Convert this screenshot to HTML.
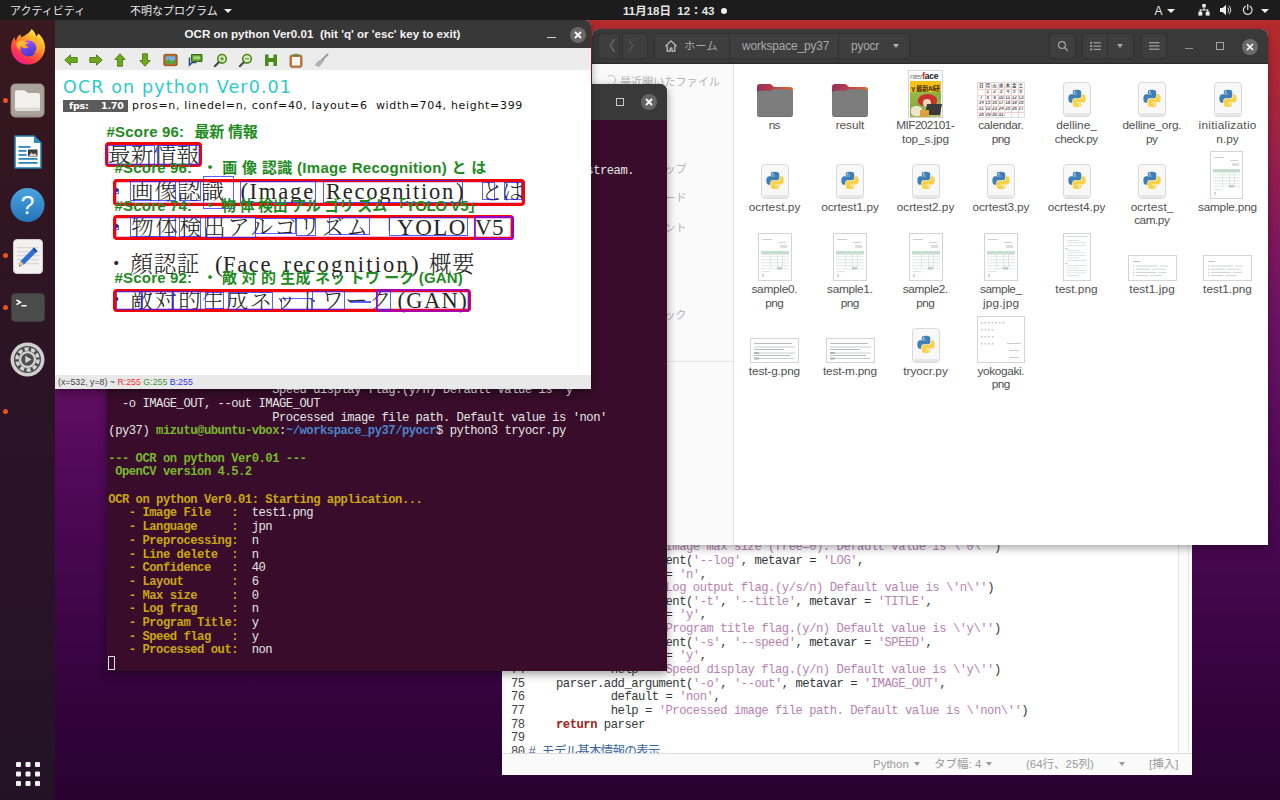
<!DOCTYPE html>
<html lang="ja">
<head>
<meta charset="utf-8">
<title>Ubuntu desktop - OCR on python</title>
<style>
*{box-sizing:border-box;margin:0;padding:0}
html,body{width:1280px;height:800px;overflow:hidden}
body{position:relative;font-family:"Liberation Sans","Noto Sans CJK JP",sans-serif;font-size:13px;color:#333;
 background:linear-gradient(to bottom,#b52b2c 0px,#b32a2e 40px,#a8263a 100px,#98204c 160px,#80185c 240px,#6c1262 320px,#5e0e60 400px,#580b5c 430px,#4a0752 520px,#3e0546 620px,#31033a 720px,#290230 800px);}
.abs{position:absolute}
/* ---------- top bar ---------- */
#topbar{position:absolute;left:0;top:0;width:1280px;height:20px;background:#1c1c1c;color:#e6e6e6;font-size:11px;line-height:19px;z-index:50;white-space:nowrap}
#topbar span{position:absolute;top:1.800px}
#topbar span.tri{top:8.500px;width:0;height:0;border-left:4px solid transparent;border-right:4px solid transparent;border-top:4.500px solid #efefef}
/* ---------- dock ---------- */
#dock{position:absolute;left:0;top:20px;width:55px;height:780px;z-index:49;
 background:linear-gradient(to bottom,#3a181f 0,#33161f 120px,#2d1425 300px,#291328 500px,#231226 780px)}
.dot{position:absolute;left:3px;width:5px;height:5px;border-radius:50%;background:#e95420}
/* ---------- generic window ---------- */
.win{position:absolute;overflow:hidden}
.hb{position:absolute;left:0;top:0;right:0;background:#353535}

/* ---------- gedit ---------- */
#gedit{left:502px;top:150px;width:690px;height:625px;background:#fff;z-index:10}
#gedit .code{position:absolute;left:0;top:0;width:678px;height:604px;overflow:hidden;font-family:"Liberation Mono","DejaVu Sans Mono","Noto Sans CJK JP",monospace;font-size:12.2px;letter-spacing:-0.47px;color:#34383a;white-space:pre}
#gedit .ln{position:absolute;left:0;height:13.65px;line-height:13.65px;width:678px}
#gedit .ln i{font-style:normal;position:absolute;left:9px;color:#444}
#gedit .ln b{font-weight:normal;position:absolute;left:26.6px}
#gedit .s{color:#b781b4}
#gedit .k{color:#a01f24;font-weight:bold}
#gedit .c{color:#3c66a6;font-size:12.600px;letter-spacing:-.85px}
#gedit .sb{position:absolute;left:0;right:0;bottom:0;height:22px;background:#fafafa;border-top:1px solid #dcdcdc;font-size:11.500px;color:#9a9a9a;line-height:20px}
#gedit .sb span{position:absolute;top:0;white-space:nowrap}
#gedit .sb u{display:inline-block;width:0;height:0;margin-left:5px;vertical-align:2px;border-left:3.500px solid transparent;border-right:3.500px solid transparent;border-top:4px solid #9a9a9a}
#gedit .scr{position:absolute;left:675.500px;top:0;width:14.500px;height:604px;background:#fcfcfc;border-left:1px solid #e4e4e4}
#gedit .scr:after{content:"";position:absolute;left:9.500px;top:0;bottom:0;width:1px;background:#e6e6e6}

/* ---------- nautilus ---------- */
#naut{left:591.500px;top:29px;width:676.500px;height:516px;background:#fff;border-radius:7px 7px 0 0;z-index:20;box-shadow:0 3px 9px rgba(0,0,0,.35)}
#naut .hb{height:35px;background:#393939;border-bottom:1px solid #2a2a2a}
#naut .btn{position:absolute;top:4px;height:26px;background:#3e3e3e;border:1px solid #313131;border-radius:4px;color:#a9a9a9;font-size:12.5px;line-height:24px;white-space:nowrap}
#naut .side{position:absolute;left:0;top:35px;width:142px;bottom:0;background:#fafafa;border-right:1px solid #e0e0e0;color:#b4b4b4;font-size:11.100px}
#naut .side div{position:absolute;left:28.500px;height:20px;line-height:20px;white-space:nowrap}
#naut .f{position:absolute;width:90px;margin-left:-45px;text-align:center;font-size:11.800px;line-height:13.200px;color:#505050;white-space:nowrap}
#naut .ic{position:absolute}

/* ---------- terminal ---------- */
#term{left:106.500px;top:84px;width:560.500px;height:587px;background:#380c2a;border-radius:7px 7px 0 0;z-index:30;box-shadow:0 3px 10px rgba(0,0,0,.4)}
#term .hb{height:36px;background:#393939}
#term .tt{position:absolute;left:0;right:0;top:9px;text-align:center;color:#bdbdbd;font-weight:bold;font-size:12.500px}
#term .tb{position:absolute;left:0;top:0;right:0;bottom:0;font-family:"Liberation Mono","DejaVu Sans Mono",monospace;font-size:12.200px;letter-spacing:-0.485px;color:#e6e6e6;white-space:pre}
#term .r{position:absolute;left:1.800px;height:13.680px;line-height:13.680px}
#term b.g{color:#79b829}
#term b.bl{color:#4a84c8}
#term b.y{color:#c9a70c}

/* ---------- OCR window ---------- */
#ocr{left:55px;top:20px;width:536px;height:369px;background:#fff;border-radius:0 6px 0 0;z-index:40;box-shadow:0 3px 10px rgba(0,0,0,.4)}
#ocr .hb{height:28px;background:#383838}
#ocr .tt{position:absolute;left:0;right:1px;top:7px;text-align:center;color:#f4f4f4;font-weight:bold;font-size:11.600px;white-space:nowrap}
#ocr .tool{position:absolute;left:0;top:28px;width:536px;height:22px;background:#ececec}
#ocr .tool svg{position:absolute;top:4.500px}
#ocr .img{position:absolute;left:0;top:50px;width:536px;height:307px;background:#fff;overflow:hidden}
#ocr .stat{position:absolute;left:0;bottom:0;width:536px;height:14.500px;background:#e9e9e9;font-size:8.800px;line-height:15px;padding-left:3px;color:#444;white-space:nowrap}
#ocr .h1{position:absolute;left:8px;top:6.300px;font-family:"DejaVu Sans","Liberation Sans",sans-serif;font-size:17.500px;line-height:22px;color:#2ccaca;white-space:nowrap;letter-spacing:1.130px}
#ocr .fps{position:absolute;left:8px;top:30px;width:65px;height:12px;background:#5b5b5b;color:#fff;font-family:"DejaVu Sans","Liberation Sans",sans-serif;font-size:9.500px;line-height:12px;font-weight:bold;padding-left:6px;white-space:pre;letter-spacing:-.2px}
#ocr .h2{position:absolute;left:77px;top:29px;font-family:"DejaVu Sans","Liberation Sans",sans-serif;font-size:11px;line-height:14px;color:#111;white-space:nowrap;letter-spacing:.68px}

#ocr .t{position:absolute;line-height:1;white-space:pre;font-weight:300}
#ocr .rb{position:absolute;border:3px solid #f00404;border-radius:4px;box-shadow:0 0 0 .6px rgba(150,0,200,.55) inset}
#ocr .bb{position:absolute;border:1px solid rgba(40,40,255,.75)}
#ocr .pb{position:absolute;border:2px solid rgba(150,0,215,.8);border-radius:3px}
</style>
</head>
<body>

<!-- ================= TOP BAR ================= -->
<!-- TOP-START -->
<div id="topbar">
 <span style="left:10px">アクティビティ</span>
 <span style="left:130px">不明なプログラム</span>
 <span class="tri" style="left:224px"></span>
 <span id="clock" style="left:623px;font-weight:bold;font-size:11.500px">11月18日&nbsp; 12：43</span>
 <span style="left:721px;top:7.500px;width:6px;height:6px;border-radius:50%;background:#f2f2f2"></span>
 <span style="left:1154.500px;font-size:12px">A</span>
 <span class="tri" style="left:1167px"></span>
 <svg style="position:absolute;left:1198px;top:4px" width="12" height="12" viewBox="0 0 14 14"><g fill="#efefef"><rect x="5" y="0" width="4" height="4"/><rect x="6.400" y="4" width="1.200" height="3"/><rect x="2" y="6.400" width="10" height="1.200"/><rect x="2" y="6.400" width="1.200" height="3"/><rect x="10.800" y="6.400" width="1.200" height="3"/><rect x=".5" y="9" width="4.500" height="4.500"/><rect x="9" y="9" width="4.500" height="4.500"/></g></svg>
 <svg style="position:absolute;left:1220px;top:4px" width="12" height="12" viewBox="0 0 14 14"><path d="M0 4.800h3L7 1v12L3 9.200H0z" fill="#efefef"/><path d="M8.800 4.200a3.600 3.600 0 0 1 0 5.600M10.300 2.300a6 6 0 0 1 0 9.400" fill="none" stroke="#cfcfcf" stroke-width="1.200"/></svg>
 <svg style="position:absolute;left:1241.500px;top:4px" width="11.500" height="11.500" viewBox="0 0 14 14"><path d="M4.300 2.800a5.300 5.300 0 1 0 5.400 0" fill="none" stroke="#efefef" stroke-width="1.400" stroke-linecap="round"/><path d="M7 .8v5.700" stroke="#efefef" stroke-width="1.400" stroke-linecap="round"/></svg>
 <span class="tri" style="left:1261px"></span>
</div>
<!-- TOP-END -->

<!-- ================= DOCK ================= -->
<!-- DOCK-START -->
<div id="dock">
 <!-- firefox -->
 <svg style="position:absolute;left:10px;top:8px" width="36" height="37" viewBox="0 0 36 37">
  <defs><linearGradient id="ffa" x1=".85" y1=".05" x2=".25" y2="1"><stop offset="0" stop-color="#fff04a"/><stop offset=".28" stop-color="#ffb52a"/><stop offset=".55" stop-color="#ff6a2c"/><stop offset=".8" stop-color="#ff2f55"/><stop offset="1" stop-color="#e81f9a"/></linearGradient>
  <linearGradient id="ffb" x1=".3" y1="0" x2=".6" y2="1"><stop offset="0" stop-color="#a557ff"/><stop offset=".5" stop-color="#6a45e6"/><stop offset="1" stop-color="#4438c8"/></linearGradient>
  <linearGradient id="ffc" x1="0" y1="0" x2="1" y2="1"><stop offset="0" stop-color="#ffd23a"/><stop offset="1" stop-color="#ff8a1f"/></linearGradient></defs>
  <path d="M21.500 1c2.600 2 4.200 4.600 4.500 7.400 1.200-.6 2-1.700 2.200-2.800 4 3.300 6.800 8 6.800 13.900C35 29 27.400 36.500 18 36.500S1 29 1 19.500c0-4.200 1.400-7.800 3.600-10.400 0 1.600.5 3 1.400 3.900C6.400 10 8 7.700 10.600 6.200c-.2 1.300.2 2.300 1 3 2.200-1.300 4.500-2.200 6.200-3.700C19.500 4 20.800 2.700 21.500 1z" fill="url(#ffa)"/>
  <circle cx="18.500" cy="20.500" r="8" fill="url(#ffb)"/>
  <path d="M6.500 15.500c1.800-2.800 4.800-3.600 7.300-2.800 1.900.6 3.100 2 5.500 1.900-1 1.300-2.600 1.700-3.900 1.700.6 1.400 1.800 2.500 3.300 3-2.400 1.700-6 1.200-7.700-1-1 .9-1.100 2.600-.4 4-2.600-1.100-4.300-3.600-4.100-6.800z" fill="url(#ffc)"/>
  <path d="M19 9.500c4 .2 7.200 3 8 6.800.8 4-1.400 7.400-4.600 8.800 4-.2 7.300-3 8.200-7 .8-3.800-.8-7.600-3.800-9.800.3 1.200 0 2.300-.6 3.200C25 9.800 22.500 8.800 19 9.500z" fill="#ffb52a" opacity=".55"/>
 </svg>
 <!-- files -->
 <svg style="position:absolute;left:10px;top:63px" width="35" height="35" viewBox="0 0 35 35"><rect x=".5" y=".5" width="34" height="34" rx="5" fill="#9b948a"/><rect x="1.500" y="1.500" width="32" height="31" rx="4.500" fill="#aaa397"/><path d="M5 9.500c0-1.400.9-2.300 2.300-2.300h6.200c1 0 1.600.4 2.200 1l1.200 1.100c.4.400.9.600 1.600.600h9.200c1.400 0 2.300.9 2.300 2.300V25.500c0 1.400-.9 2.300-2.300 2.300H7.300C5.900 27.800 5 26.900 5 25.500z" fill="#f3f1ee"/><rect x="5" y="24.500" width="25" height="3.300" rx="1.600" fill="#dedbd6"/></svg>
 <!-- writer -->
 <svg style="position:absolute;left:14px;top:115px" width="28" height="34" viewBox="0 0 28 34"><path d="M1 1h19l7 7v25H1z" fill="#fdfdfd" stroke="#1f7fb5" stroke-width="1.600" stroke-linejoin="round"/><path d="M20 1v7h7z" fill="#2a8fc9"/><g fill="#2f86bd"><rect x="4.500" y="11" width="12" height="1.800"/><rect x="4.500" y="15" width="8" height="1.800"/><rect x="4.500" y="19" width="8" height="1.800"/><rect x="4.500" y="23" width="19" height="1.800"/><rect x="4.500" y="27" width="19" height="1.800"/></g><rect x="14" y="14.500" width="9.500" height="7" fill="#3d3d3d"/><path d="M14.800 21 17.500 17.500 19.500 19.500 21 18 23 21z" fill="#d8d8d8"/></svg>
 <!-- help -->
 <svg style="position:absolute;left:10px;top:167px" width="35" height="36" viewBox="0 0 35 36"><defs><linearGradient id="hg" x1="0" y1="0" x2="0" y2="1"><stop offset="0" stop-color="#4aa3e0"/><stop offset="1" stop-color="#2475b8"/></linearGradient></defs><circle cx="17.500" cy="18" r="17" fill="url(#hg)"/><text x="17.500" y="26.500" text-anchor="middle" font-family="Liberation Sans,sans-serif" font-size="25" fill="#fff">?</text></svg>
 <!-- text editor -->
 <svg style="position:absolute;left:13px;top:219px" width="30" height="35" viewBox="0 0 30 35"><rect x=".5" y=".5" width="29" height="34" rx="3.500" fill="#f2f1ef" stroke="#cfcdc8"/><g fill="#d9d7d2"><rect x="4" y="8" width="22" height="1.200"/><rect x="4" y="12" width="22" height="1.200"/><rect x="4" y="16" width="22" height="1.200"/><rect x="4" y="20" width="22" height="1.200"/><rect x="4" y="24" width="22" height="1.200"/></g><path d="M21 8.500 24.500 12 11 25.500 6 27.500 7.500 22z" fill="#2f6fd6"/><path d="M7.500 22 6 27.500 11 25.500z" fill="#f0c27a"/><path d="M6.500 25.800 6 27.500 7.700 26.800z" fill="#444"/><path d="M21 8.500 24.500 12 22.800 13.700 19.300 10.200z" fill="#1f4fa8"/></svg>
 <!-- terminal -->
 <svg style="position:absolute;left:10.500px;top:273px" width="34" height="29" viewBox="0 0 34 29"><rect x=".5" y=".5" width="33" height="28" rx="3.500" fill="#4b4b4b" stroke="#3a3a3a"/><path d="M5.500 7 9.500 9.300 5.500 11.600" fill="none" stroke="#fff" stroke-width="1.500"/><rect x="10.500" y="12" width="5" height="1.500" fill="#fff"/></svg>
 <!-- settings / updater -->
 <svg style="position:absolute;left:10px;top:322px" width="35" height="35" viewBox="0 0 35 35"><circle cx="17.500" cy="17.500" r="17" fill="#cfcfcf"/><circle cx="17.500" cy="17.500" r="13.500" fill="#4e4e4e"/><circle cx="17.500" cy="17.500" r="10.500" fill="none" stroke="#d4d4d4" stroke-width="3.400" stroke-dasharray="4.100 2.500"/><circle cx="17.500" cy="17.500" r="8.600" fill="#d4d4d4"/><circle cx="17.500" cy="17.500" r="6.300" fill="#4e4e4e"/><path d="M15.300 13.800 21.500 17.500 15.300 21.200z" fill="#d4d4d4"/></svg>
 <span class="dot" style="top:77.500px"></span><span class="dot" style="top:232.500px"></span><span class="dot" style="top:284.500px"></span><span class="dot" style="top:388.500px"></span>
 <!-- apps grid -->
 <svg style="position:absolute;left:16px;top:742px" width="24" height="24" viewBox="0 0 24 24"><g fill="#f2f2f2"><rect x="0" y="0" width="5" height="5" rx="1"/><rect x="9.500" y="0" width="5" height="5" rx="1"/><rect x="19" y="0" width="5" height="5" rx="1"/><rect x="0" y="9.500" width="5" height="5" rx="1"/><rect x="9.500" y="9.500" width="5" height="5" rx="1"/><rect x="19" y="9.500" width="5" height="5" rx="1"/><rect x="0" y="19" width="5" height="5" rx="1"/><rect x="9.500" y="19" width="5" height="5" rx="1"/><rect x="19" y="19" width="5" height="5" rx="1"/></g></svg>
</div>
<!-- DOCK-END -->

<!-- ================= GEDIT ================= -->
<div id="gedit" class="win">
<div class="hb gedit-hb" style="height:37px;background:#393939;z-index:2"><span style="position:absolute;left:10px;top:10px;color:#bdbdbd;font-size:12px">開く(O)</span><span style="position:absolute;left:0;right:0;top:5px;text-align:center;color:#cfcfcf;font-weight:bold;font-size:12px;line-height:14px">tryocr.py<br><span style="font-weight:normal;font-size:10.500px;color:#a5a5a5">~/workspace_py37/pyocr</span></span><span style="position:absolute;right:70px;top:10px;color:#bdbdbd;font-size:12px">保存(S)</span></div>
<div class="code">
<div class="ln" style="top:391.20px"><i>65</i><b>            help = <span class=s>'Image max size (free=0). Default value is \'0\''</span>)</b></div>
<div class="ln" style="top:404.85px"><i>66</i><b>    parser.add_argument(<span class=s>'--log'</span>, metavar = <span class=s>'LOG'</span>,</b></div>
<div class="ln" style="top:418.50px"><i>67</i><b>            default = <span class=s>'n'</span>,</b></div>
<div class="ln" style="top:432.15px"><i>68</i><b>            help = <span class=s>'Log output flag.(y/s/n) Default value is \'n\''</span>)</b></div>
<div class="ln" style="top:445.80px"><i>69</i><b>    parser.add_argument(<span class=s>'-t'</span>, <span class=s>'--title'</span>, metavar = <span class=s>'TITLE'</span>,</b></div>
<div class="ln" style="top:459.45px"><i>70</i><b>            default = <span class=s>'y'</span>,</b></div>
<div class="ln" style="top:473.10px"><i>71</i><b>            help = <span class=s>'Program title flag.(y/n) Default value is \'y\''</span>)</b></div>
<div class="ln" style="top:486.75px"><i>72</i><b>    parser.add_argument(<span class=s>'-s'</span>, <span class=s>'--speed'</span>, metavar = <span class=s>'SPEED'</span>,</b></div>
<div class="ln" style="top:500.40px"><i>73</i><b>            default = <span class=s>'y'</span>,</b></div>
<div class="ln" style="top:514.05px"><i>74</i><b>            help = <span class=s>'Speed display flag.(y/n) Default value is \'y\''</span>)</b></div>
<div class="ln" style="top:527.70px"><i>75</i><b>    parser.add_argument(<span class=s>'-o'</span>, <span class=s>'--out'</span>, metavar = <span class=s>'IMAGE_OUT'</span>,</b></div>
<div class="ln" style="top:541.35px"><i>76</i><b>            default = <span class=s>'non'</span>,</b></div>
<div class="ln" style="top:555.00px"><i>77</i><b>            help = <span class=s>'Processed image file path. Default value is \'non\''</span>)</b></div>
<div class="ln" style="top:568.65px"><i>78</i><b>    <span class=k>return</span> parser</b></div>
<div class="ln" style="top:582.30px"><i>79</i><b></b></div>
<div class="ln" style="top:595.95px"><i>80</i><b><span class=c># モデル基本情報の表示</span></b></div>
</div>
<div class="scr"></div>
<div class="sb"><span style="left:371px">Python<u></u></span><span style="left:432px">タブ幅: 4<u></u></span><span style="left:524px">(64行、25列)</span><span style="left:612px"><u></u></span><span style="left:647px">[挿入]</span></div>
</div>

<!-- NAUT-START -->
<div id="naut" class="win">
<div class="hb">
<div class="btn" style="left:6px;width:22px;border-radius:4px 0 0 4px;text-align:center;color:#7a7a7a;font-size:14px;line-height:23px">&#12296;</div>
<div class="btn" style="left:30px;width:26px;border-radius:0 4px 4px 0;text-align:center;color:#5c5c5c;font-size:14px;line-height:23px">&#12297;</div>
<div class="btn" style="left:62.500px;width:76px;border-radius:4px 0 0 4px"><svg style="position:absolute;left:9px;top:5px" width="14" height="14" viewBox="0 0 14 14"><path d="M7 1.800 1.800 7H3.200v5.200h2.900V9h1.800v3.200h2.900V7h1.400z" fill="none" stroke="#c4c4c4" stroke-width="1.200" stroke-linejoin="round"/></svg><span style="position:absolute;left:29px;top:0;font-size:11.300px">ホーム</span></div>
<div class="btn" style="left:138.500px;width:109px;border-radius:0;border-left:none"><span style="position:absolute;left:12px;top:0;font-size:11.900px;letter-spacing:-.15px">workspace_py37</span></div>
<div class="btn" style="left:247.500px;width:71px;border-radius:0 4px 4px 0;border-left:none"><span style="position:absolute;left:12px;top:0;font-size:11.900px;letter-spacing:-.2px">pyocr</span><span style="position:absolute;left:54px;top:10px;width:0;height:0;border-left:3.500px solid transparent;border-right:3.500px solid transparent;border-top:4px solid #b5b5b5"></span></div>
<div class="btn" style="left:457px;width:27px"><svg style="position:absolute;left:7px;top:6px" width="12" height="12" viewBox="0 0 14 14"><circle cx="5.800" cy="5.800" r="4" fill="none" stroke="#a2a2a2" stroke-width="1.400"/><path d="M8.800 8.800 12.500 12.500" stroke="#a2a2a2" stroke-width="1.600"/></svg></div>
<div class="btn" style="left:490px;width:26px;border-radius:4px 0 0 4px"><svg style="position:absolute;left:7px;top:7px" width="11" height="10" viewBox="0 0 13 12"><g fill="#a2a2a2"><rect x="0" y="1" width="2.500" height="2.200"/><rect x="4" y="1.400" width="9" height="1.400"/><rect x="0" y="5" width="2.500" height="2.200"/><rect x="4" y="5.400" width="9" height="1.400"/><rect x="0" y="9" width="2.500" height="2.200"/><rect x="4" y="9.400" width="9" height="1.400"/></g></svg></div>
<div class="btn" style="left:516px;width:26px;border-radius:0 4px 4px 0;border-left:none"><span style="position:absolute;left:9px;top:10px;width:0;height:0;border-left:3.500px solid transparent;border-right:3.500px solid transparent;border-top:4px solid #a5a5a5"></span></div>
<div class="btn" style="left:549px;width:26px"><svg style="position:absolute;left:7.500px;top:7px" width="10.500" height="10" viewBox="0 0 13 12"><g fill="#a2a2a2"><rect x="0" y="1.200" width="13" height="1.500"/><rect x="0" y="5.200" width="13" height="1.500"/><rect x="0" y="9.200" width="13" height="1.500"/></g></svg></div>
<div style="position:absolute;left:593px;top:19px;width:8px;height:1.400px;background:#8c8c8c"></div>
<div style="position:absolute;left:624px;top:13px;width:8px;height:8px;border:1.300px solid #a5a5a5"></div>
<div style="position:absolute;left:650px;top:9.500px;width:16px;height:16px;border-radius:50%;background:#6a6a6a"><svg style="position:absolute;left:4px;top:4px" width="8" height="8" viewBox="0 0 8 8"><path d="M1 1 7 7M7 1 1 7" stroke="#fff" stroke-width="1.700"/></svg></div>
</div>
<div class="side">
<div style="top:8px">最近開いたファイル</div>
<div style="top:37.1px">星付き</div>
<div style="top:66.2px">ホーム</div>
<div style="top:95.3px">デスクトップ</div>
<div style="top:124.4px">ダウンロード</div>
<div style="top:153.5px">ドキュメント</div>
<div style="top:182.6px">ビデオ</div>
<div style="top:211.7px">ピクチャ</div>
<div style="top:240.8px">ミュージック</div>
<div style="top:269.9px">ゴミ箱</div>
<span style="position:absolute;left:14px;top:11px;width:10px;height:10px;border:1.200px solid #c4c4c4;border-radius:50%;border-left-color:transparent"></span>
<span style="position:absolute;left:0;top:297px;width:141px;height:1px;background:#e6e6e6"></span>
<div style="top:307px">他の場所</div>
</div>
<svg class="ic" style="left:165px;top:55px" width="36" height="33" viewBox="0 0 36 33"><linearGradient id="fg775" x1="0" x2="1" y1="0" y2="0"><stop offset="0" stop-color="#96305a"/><stop offset=".45" stop-color="#b8414a"/><stop offset="1" stop-color="#e8672b"/></linearGradient><path d="M3 0h9.5c1.2 0 1.8.5 2.6 1.3l1 .9c.5.5 1 .7 1.8.7H33a3 3 0 0 1 3 3V12H0V3a3 3 0 0 1 3-3z" fill="url(#fg775)"/><path d="M0 9.2c0-1.5 1-2.400 2.600-2.400h10.200c1.200 0 1.900-.3 2.600-1l.5-.5h17.600C35 5.300 36 6.300 36 7.800V30a3 3 0 0 1-3 3H3a3 3 0 0 1-3-3z" fill="#7d7d7d"/><path d="M0 29.500V30a3 3 0 0 0 3 3h30a3 3 0 0 0 3-3v-.5a3 3 0 0 1-3 3H3a3 3 0 0 1-3-3z" fill="#636363"/></svg>
<div class="f" style="left:183px;top:90.4px"><span style="letter-spacing:-0.71px;margin-right:0.71px">ns</span></div>
<svg class="ic" style="left:240px;top:55px" width="36" height="33" viewBox="0 0 36 33"><linearGradient id="fg850" x1="0" x2="1" y1="0" y2="0"><stop offset="0" stop-color="#96305a"/><stop offset=".45" stop-color="#b8414a"/><stop offset="1" stop-color="#e8672b"/></linearGradient><path d="M3 0h9.5c1.2 0 1.8.5 2.6 1.3l1 .9c.5.5 1 .7 1.8.7H33a3 3 0 0 1 3 3V12H0V3a3 3 0 0 1 3-3z" fill="url(#fg850)"/><path d="M0 9.2c0-1.5 1-2.400 2.600-2.400h10.200c1.200 0 1.900-.3 2.600-1l.5-.5h17.600C35 5.300 36 6.300 36 7.800V30a3 3 0 0 1-3 3H3a3 3 0 0 1-3-3z" fill="#7d7d7d"/><path d="M0 29.500V30a3 3 0 0 0 3 3h30a3 3 0 0 0 3-3v-.5a3 3 0 0 1-3 3H3a3 3 0 0 1-3-3z" fill="#636363"/></svg>
<div class="f" style="left:258.5px;top:90.4px"><span style="letter-spacing:-0.07px;margin-right:0.07px">result</span></div>
<div class="ic" style="left:316px;top:41px;width:35px;height:48px;border:1px solid #d6d6d6;background:#fff;overflow:hidden"><div style="position:absolute;left:0;top:1px;width:100%;height:9px;font:italic 8px/9px 'Liberation Sans',sans-serif;color:#777;white-space:nowrap;text-indent:1.500px;letter-spacing:-.4px">nter<span style="font:bold 8.600px/9px 'Liberation Sans',sans-serif;color:#222;letter-spacing:-.3px"><span style="color:#d81e1e">f</span>ace</span></div><div style="position:absolute;left:1px;top:10px;width:31px;height:11px;background:#f6c21a"></div><div style="position:absolute;left:1.500px;top:13.500px;width:30px;height:7px;font:bold 6.500px/7px 'Liberation Sans','Noto Sans CJK JP',sans-serif;color:#4a2a08;white-space:nowrap;overflow:hidden;letter-spacing:-.5px">ｙ最新AI研究室</div><div style="position:absolute;left:1px;top:21px;width:31px;height:25px;background:linear-gradient(160deg,#9dbb4a 0,#86ad3e 45%,#c8c47a 100%)"></div><div style="position:absolute;left:9px;top:23px;width:19px;height:12px;border-radius:50% 50% 35% 35%;background:#c9322b"></div><div style="position:absolute;left:14px;top:28px;width:8px;height:8px;border-radius:50%;background:#f2d6b8"></div><div style="position:absolute;left:17px;top:33px;width:15px;height:11px;background:#3d3b3a;transform:skewX(-10deg)"></div><div style="position:absolute;left:2px;top:35px;width:11px;height:10px;background:#efe6cf;border-radius:40%"></div><div style="position:absolute;left:11px;top:39px;width:9px;height:7px;background:#d9a13a"></div></div>
<div class="f" style="left:334px;top:90.4px"><span style="letter-spacing:-0.59px;margin-right:0.59px">MIF202101-</span><br><span style="letter-spacing:-0.10px;margin-right:0.10px">top_s.jpg</span></div>
<div class="ic" style="left:385px;top:53px;width:48px;height:36px;border:1px solid #dcdcdc;background:#fff;overflow:hidden;font:bold 4.600px/5.700px 'Liberation Sans','Noto Sans CJK JP',sans-serif;color:#555"><span style="position:absolute;left:0.5px;top:0.2px;width:6.600px;text-align:center">日</span><span style="position:absolute;left:7.1px;top:0.2px;width:6.600px;text-align:center">月</span><span style="position:absolute;left:13.7px;top:0.2px;width:6.600px;text-align:center">火</span><span style="position:absolute;left:20.3px;top:0.2px;width:6.600px;text-align:center">水</span><span style="position:absolute;left:26.9px;top:0.2px;width:6.600px;text-align:center">木</span><span style="position:absolute;left:33.5px;top:0.2px;width:6.600px;text-align:center">金</span><span style="position:absolute;left:40.1px;top:0.2px;width:6.600px;text-align:center">土</span><span style="position:absolute;left:7.1px;top:5.9px;width:6.600px;text-align:center">1</span><span style="position:absolute;left:13.7px;top:5.9px;width:6.600px;text-align:center">2</span><span style="position:absolute;left:20.3px;top:5.9px;width:6.600px;text-align:center">3</span><span style="position:absolute;left:26.9px;top:5.9px;width:6.600px;text-align:center">4</span><span style="position:absolute;left:33.5px;top:5.9px;width:6.600px;text-align:center">5</span><span style="position:absolute;left:40.1px;top:5.9px;width:6.600px;text-align:center">6</span><span style="position:absolute;left:0.5px;top:11.6px;width:6.600px;text-align:center">7</span><span style="position:absolute;left:7.1px;top:11.6px;width:6.600px;text-align:center">8</span><span style="position:absolute;left:13.7px;top:11.6px;width:6.600px;text-align:center">9</span><span style="position:absolute;left:20.3px;top:11.6px;width:6.600px;text-align:center">10</span><span style="position:absolute;left:26.9px;top:11.6px;width:6.600px;text-align:center">11</span><span style="position:absolute;left:33.5px;top:11.6px;width:6.600px;text-align:center">12</span><span style="position:absolute;left:40.1px;top:11.6px;width:6.600px;text-align:center">13</span><span style="position:absolute;left:0.5px;top:17.3px;width:6.600px;text-align:center">14</span><span style="position:absolute;left:7.1px;top:17.3px;width:6.600px;text-align:center">15</span><span style="position:absolute;left:13.7px;top:17.3px;width:6.600px;text-align:center">16</span><span style="position:absolute;left:20.3px;top:17.3px;width:6.600px;text-align:center">17</span><span style="position:absolute;left:26.9px;top:17.3px;width:6.600px;text-align:center">18</span><span style="position:absolute;left:33.5px;top:17.3px;width:6.600px;text-align:center">19</span><span style="position:absolute;left:40.1px;top:17.3px;width:6.600px;text-align:center">20</span><span style="position:absolute;left:0.5px;top:23px;width:6.600px;text-align:center">21</span><span style="position:absolute;left:7.1px;top:23px;width:6.600px;text-align:center">22</span><span style="position:absolute;left:13.7px;top:23px;width:6.600px;text-align:center">23</span><span style="position:absolute;left:20.3px;top:23px;width:6.600px;text-align:center">24</span><span style="position:absolute;left:26.9px;top:23px;width:6.600px;text-align:center">25</span><span style="position:absolute;left:33.5px;top:23px;width:6.600px;text-align:center">26</span><span style="position:absolute;left:40.1px;top:23px;width:6.600px;text-align:center">27</span><span style="position:absolute;left:0.5px;top:28.7px;width:6.600px;text-align:center">28</span><span style="position:absolute;left:7.1px;top:28.7px;width:6.600px;text-align:center">29</span><span style="position:absolute;left:13.7px;top:28.7px;width:6.600px;text-align:center">30</span><span style="position:absolute;left:20.3px;top:28.7px;width:6.600px;text-align:center">31</span><div style="position:absolute;left:0;top:6px;width:100%;height:.5px;background:#f0cfd0"></div><div style="position:absolute;left:0;top:11.7px;width:100%;height:.5px;background:#f0cfd0"></div><div style="position:absolute;left:0;top:17.4px;width:100%;height:.5px;background:#f0cfd0"></div><div style="position:absolute;left:0;top:23.1px;width:100%;height:.5px;background:#f0cfd0"></div><div style="position:absolute;left:0;top:28.8px;width:100%;height:.5px;background:#f0cfd0"></div><div style="position:absolute;top:0;left:7px;height:100%;width:.5px;background:#f0cfd0"></div><div style="position:absolute;top:0;left:13.6px;height:100%;width:.5px;background:#f0cfd0"></div><div style="position:absolute;top:0;left:20.2px;height:100%;width:.5px;background:#f0cfd0"></div><div style="position:absolute;top:0;left:26.8px;height:100%;width:.5px;background:#f0cfd0"></div><div style="position:absolute;top:0;left:33.4px;height:100%;width:.5px;background:#f0cfd0"></div><div style="position:absolute;top:0;left:40px;height:100%;width:.5px;background:#f0cfd0"></div></div>
<div class="f" style="left:409.5px;top:90.4px"><span style="letter-spacing:-0.27px;margin-right:0.27px">calendar.</span><br><span style="letter-spacing:-0.47px;margin-right:0.47px">png</span></div>
<svg class="ic" style="left:471px;top:53px" width="28" height="35" viewBox="0 0 28 35"><rect x=".5" y=".5" width="27" height="34" rx="3.5" fill="#f8f8f8" stroke="#d9d9d9"/><rect x="1.5" y="31" width="25" height="3" rx="1.5" fill="#e6e6e6"/><g transform="translate(5.400,7.800) scale(.72)"><path fill="#3f7fb6" fill-rule="evenodd" d="M14.25.18l.9.2.73.26.59.3.45.32.34.34.25.34.16.33.1.3.04.26.02.2-.01.13V8.5l-.05.63-.13.55-.21.46-.26.38-.3.31-.33.25-.35.19-.35.14-.33.1-.3.07-.26.04-.21.02H8.77l-.69.05-.59.14-.5.22-.41.27-.33.32-.27.35-.2.36-.15.37-.1.35-.07.32-.04.27-.02.21v3.06H3.17l-.21-.03-.28-.07-.32-.12-.35-.18-.36-.26-.36-.36-.35-.46-.32-.59-.28-.73-.21-.88-.14-1.05-.05-1.23.06-1.22.16-1.04.24-.87.32-.71.36-.57.4-.44.42-.33.42-.24.4-.16.36-.1.32-.05.24-.01h.16l.06.01h8.16v-.83H6.18l-.01-2.75-.02-.37.05-.34.11-.31.17-.28.25-.26.31-.23.38-.2.44-.18.51-.15.58-.12.64-.1.71-.06.77-.04.84-.02 1.27.05zm-6.3 1.98l-.23.33-.08.41.08.41.23.34.33.22.41.09.41-.09.33-.22.23-.34.08-.41-.08-.41-.23-.33-.33-.22-.41-.09-.41.09z"/><path fill="#f7d34c" fill-rule="evenodd" d="M21.04 6.11l.28.06.32.12.35.18.36.27.36.35.35.47.32.59.28.73.21.88.14 1.04.05 1.23-.06 1.23-.16 1.04-.24.86-.32.71-.36.57-.4.45-.42.33-.42.24-.4.16-.36.09-.32.05-.24.02-.16-.01h-8.22v.82h5.84l.01 2.76.02.36-.05.34-.11.31-.17.29-.25.25-.31.24-.38.2-.44.17-.51.15-.58.13-.64.09-.71.07-.77.04-.84.01-1.27-.04-1.07-.14-.9-.2-.73-.25-.59-.3-.45-.33-.34-.34-.25-.34-.16-.33-.1-.3-.04-.25-.02-.2.01-.13v-5.34l.05-.64.13-.54.21-.46.26-.38.3-.32.33-.24.35-.2.35-.14.33-.1.3-.06.26-.04.21-.02.13-.01h5.84l.69-.05.59-.14.5-.21.41-.28.33-.32.27-.35.2-.36.15-.36.1-.35.07-.32.04-.28.02-.21V6.07h2.09l.14.01zm-6.47 14.25l-.23.33-.08.41.08.41.23.33.33.23.41.08.41-.08.33-.23.23-.33.08-.41-.08-.41-.23-.33-.33-.23-.41-.08-.41.08z"/></g></svg>
<div class="f" style="left:485px;top:90.4px"><span style="letter-spacing:-0.02px;margin-right:0.02px">delline_</span><br><span style="letter-spacing:-0.47px;margin-right:0.47px">check.py</span></div>
<svg class="ic" style="left:546px;top:53px" width="28" height="35" viewBox="0 0 28 35"><rect x=".5" y=".5" width="27" height="34" rx="3.5" fill="#f8f8f8" stroke="#d9d9d9"/><rect x="1.5" y="31" width="25" height="3" rx="1.5" fill="#e6e6e6"/><g transform="translate(5.400,7.800) scale(.72)"><path fill="#3f7fb6" fill-rule="evenodd" d="M14.25.18l.9.2.73.26.59.3.45.32.34.34.25.34.16.33.1.3.04.26.02.2-.01.13V8.5l-.05.63-.13.55-.21.46-.26.38-.3.31-.33.25-.35.19-.35.14-.33.1-.3.07-.26.04-.21.02H8.77l-.69.05-.59.14-.5.22-.41.27-.33.32-.27.35-.2.36-.15.37-.1.35-.07.32-.04.27-.02.21v3.06H3.17l-.21-.03-.28-.07-.32-.12-.35-.18-.36-.26-.36-.36-.35-.46-.32-.59-.28-.73-.21-.88-.14-1.05-.05-1.23.06-1.22.16-1.04.24-.87.32-.71.36-.57.4-.44.42-.33.42-.24.4-.16.36-.1.32-.05.24-.01h.16l.06.01h8.16v-.83H6.18l-.01-2.75-.02-.37.05-.34.11-.31.17-.28.25-.26.31-.23.38-.2.44-.18.51-.15.58-.12.64-.1.71-.06.77-.04.84-.02 1.27.05zm-6.3 1.98l-.23.33-.08.41.08.41.23.34.33.22.41.09.41-.09.33-.22.23-.34.08-.41-.08-.41-.23-.33-.33-.22-.41-.09-.41.09z"/><path fill="#f7d34c" fill-rule="evenodd" d="M21.04 6.11l.28.06.32.12.35.18.36.27.36.35.35.47.32.59.28.73.21.88.14 1.04.05 1.23-.06 1.23-.16 1.04-.24.86-.32.71-.36.57-.4.45-.42.33-.42.24-.4.16-.36.09-.32.05-.24.02-.16-.01h-8.22v.82h5.84l.01 2.76.02.36-.05.34-.11.31-.17.29-.25.25-.31.24-.38.2-.44.17-.51.15-.58.13-.64.09-.71.07-.77.04-.84.01-1.27-.04-1.07-.14-.9-.2-.73-.25-.59-.3-.45-.33-.34-.34-.25-.34-.16-.33-.1-.3-.04-.25-.02-.2.01-.13v-5.34l.05-.64.13-.54.21-.46.26-.38.3-.32.33-.24.35-.2.35-.14.33-.1.3-.06.26-.04.21-.02.13-.01h5.84l.69-.05.59-.14.5-.21.41-.28.33-.32.27-.35.2-.36.15-.36.1-.35.07-.32.04-.28.02-.21V6.07h2.09l.14.01zm-6.47 14.25l-.23.33-.08.41.08.41.23.33.33.23.41.08.41-.08.33-.23.23-.33.08-.41-.08-.41-.23-.33-.33-.23-.41-.08-.41.08z"/></g></svg>
<div class="f" style="left:560.5px;top:90.4px"><span style="letter-spacing:-0.17px;margin-right:0.17px">delline_org.</span><br><span style="letter-spacing:-0.65px;margin-right:0.65px">py</span></div>
<svg class="ic" style="left:622px;top:53px" width="28" height="35" viewBox="0 0 28 35"><rect x=".5" y=".5" width="27" height="34" rx="3.5" fill="#f8f8f8" stroke="#d9d9d9"/><rect x="1.5" y="31" width="25" height="3" rx="1.5" fill="#e6e6e6"/><g transform="translate(5.400,7.800) scale(.72)"><path fill="#3f7fb6" fill-rule="evenodd" d="M14.25.18l.9.2.73.26.59.3.45.32.34.34.25.34.16.33.1.3.04.26.02.2-.01.13V8.5l-.05.63-.13.55-.21.46-.26.38-.3.31-.33.25-.35.19-.35.14-.33.1-.3.07-.26.04-.21.02H8.77l-.69.05-.59.14-.5.22-.41.27-.33.32-.27.35-.2.36-.15.37-.1.35-.07.32-.04.27-.02.21v3.06H3.17l-.21-.03-.28-.07-.32-.12-.35-.18-.36-.26-.36-.36-.35-.46-.32-.59-.28-.73-.21-.88-.14-1.05-.05-1.23.06-1.22.16-1.04.24-.87.32-.71.36-.57.4-.44.42-.33.42-.24.4-.16.36-.1.32-.05.24-.01h.16l.06.01h8.16v-.83H6.18l-.01-2.75-.02-.37.05-.34.11-.31.17-.28.25-.26.31-.23.38-.2.44-.18.51-.15.58-.12.64-.1.71-.06.77-.04.84-.02 1.27.05zm-6.3 1.98l-.23.33-.08.41.08.41.23.34.33.22.41.09.41-.09.33-.22.23-.34.08-.41-.08-.41-.23-.33-.33-.22-.41-.09-.41.09z"/><path fill="#f7d34c" fill-rule="evenodd" d="M21.04 6.11l.28.06.32.12.35.18.36.27.36.35.35.47.32.59.28.73.21.88.14 1.04.05 1.23-.06 1.23-.16 1.04-.24.86-.32.71-.36.57-.4.45-.42.33-.42.24-.4.16-.36.09-.32.05-.24.02-.16-.01h-8.22v.82h5.84l.01 2.76.02.36-.05.34-.11.31-.17.29-.25.25-.31.24-.38.2-.44.17-.51.15-.58.13-.64.09-.71.07-.77.04-.84.01-1.27-.04-1.07-.14-.9-.2-.73-.25-.59-.3-.45-.33-.34-.34-.25-.34-.16-.33-.1-.3-.04-.25-.02-.2.01-.13v-5.34l.05-.64.13-.54.21-.46.26-.38.3-.32.33-.24.35-.2.35-.14.33-.1.3-.06.26-.04.21-.02.13-.01h5.84l.69-.05.59-.14.5-.21.41-.28.33-.32.27-.35.2-.36.15-.36.1-.35.07-.32.04-.28.02-.21V6.07h2.09l.14.01zm-6.47 14.25l-.23.33-.08.41.08.41.23.33.33.23.41.08.41-.08.33-.23.23-.33.08-.41-.08-.41-.23-.33-.33-.23-.41-.08-.41.08z"/></g></svg>
<div class="f" style="left:636px;top:90.4px"><span style="letter-spacing:0.28px;margin-right:-0.28px">initializatio</span><br><span style="letter-spacing:0.05px;margin-right:-0.05px">n.py</span></div>
<svg class="ic" style="left:169px;top:135px" width="28" height="35" viewBox="0 0 28 35"><rect x=".5" y=".5" width="27" height="34" rx="3.5" fill="#f8f8f8" stroke="#d9d9d9"/><rect x="1.5" y="31" width="25" height="3" rx="1.5" fill="#e6e6e6"/><g transform="translate(5.400,7.800) scale(.72)"><path fill="#3f7fb6" fill-rule="evenodd" d="M14.25.18l.9.2.73.26.59.3.45.32.34.34.25.34.16.33.1.3.04.26.02.2-.01.13V8.5l-.05.63-.13.55-.21.46-.26.38-.3.31-.33.25-.35.19-.35.14-.33.1-.3.07-.26.04-.21.02H8.77l-.69.05-.59.14-.5.22-.41.27-.33.32-.27.35-.2.36-.15.37-.1.35-.07.32-.04.27-.02.21v3.06H3.17l-.21-.03-.28-.07-.32-.12-.35-.18-.36-.26-.36-.36-.35-.46-.32-.59-.28-.73-.21-.88-.14-1.05-.05-1.23.06-1.22.16-1.04.24-.87.32-.71.36-.57.4-.44.42-.33.42-.24.4-.16.36-.1.32-.05.24-.01h.16l.06.01h8.16v-.83H6.18l-.01-2.75-.02-.37.05-.34.11-.31.17-.28.25-.26.31-.23.38-.2.44-.18.51-.15.58-.12.64-.1.71-.06.77-.04.84-.02 1.27.05zm-6.3 1.98l-.23.33-.08.41.08.41.23.34.33.22.41.09.41-.09.33-.22.23-.34.08-.41-.08-.41-.23-.33-.33-.22-.41-.09-.41.09z"/><path fill="#f7d34c" fill-rule="evenodd" d="M21.04 6.11l.28.06.32.12.35.18.36.27.36.35.35.47.32.59.28.73.21.88.14 1.04.05 1.23-.06 1.23-.16 1.04-.24.86-.32.71-.36.57-.4.45-.42.33-.42.24-.4.16-.36.09-.32.05-.24.02-.16-.01h-8.22v.82h5.84l.01 2.76.02.36-.05.34-.11.31-.17.29-.25.25-.31.24-.38.2-.44.17-.51.15-.58.13-.64.09-.71.07-.77.04-.84.01-1.27-.04-1.07-.14-.9-.2-.73-.25-.59-.3-.45-.33-.34-.34-.25-.34-.16-.33-.1-.3-.04-.25-.02-.2.01-.13v-5.34l.05-.64.13-.54.21-.46.26-.38.3-.32.33-.24.35-.2.35-.14.33-.1.3-.06.26-.04.21-.02.13-.01h5.84l.69-.05.59-.14.5-.21.41-.28.33-.32.27-.35.2-.36.15-.36.1-.35.07-.32.04-.28.02-.21V6.07h2.09l.14.01zm-6.47 14.25l-.23.33-.08.41.08.41.23.33.33.23.41.08.41-.08.33-.23.23-.33.08-.41-.08-.41-.23-.33-.33-.23-.41-.08-.41.08z"/></g></svg>
<div class="f" style="left:183px;top:172.0px"><span style="letter-spacing:0.05px;margin-right:-0.05px">ocrtest.py</span></div>
<svg class="ic" style="left:244px;top:135px" width="28" height="35" viewBox="0 0 28 35"><rect x=".5" y=".5" width="27" height="34" rx="3.5" fill="#f8f8f8" stroke="#d9d9d9"/><rect x="1.5" y="31" width="25" height="3" rx="1.5" fill="#e6e6e6"/><g transform="translate(5.400,7.800) scale(.72)"><path fill="#3f7fb6" fill-rule="evenodd" d="M14.25.18l.9.2.73.26.59.3.45.32.34.34.25.34.16.33.1.3.04.26.02.2-.01.13V8.5l-.05.63-.13.55-.21.46-.26.38-.3.31-.33.25-.35.19-.35.14-.33.1-.3.07-.26.04-.21.02H8.77l-.69.05-.59.14-.5.22-.41.27-.33.32-.27.35-.2.36-.15.37-.1.35-.07.32-.04.27-.02.21v3.06H3.17l-.21-.03-.28-.07-.32-.12-.35-.18-.36-.26-.36-.36-.35-.46-.32-.59-.28-.73-.21-.88-.14-1.05-.05-1.23.06-1.22.16-1.04.24-.87.32-.71.36-.57.4-.44.42-.33.42-.24.4-.16.36-.1.32-.05.24-.01h.16l.06.01h8.16v-.83H6.18l-.01-2.75-.02-.37.05-.34.11-.31.17-.28.25-.26.31-.23.38-.2.44-.18.51-.15.58-.12.64-.1.71-.06.77-.04.84-.02 1.27.05zm-6.3 1.98l-.23.33-.08.41.08.41.23.34.33.22.41.09.41-.09.33-.22.23-.34.08-.41-.08-.41-.23-.33-.33-.22-.41-.09-.41.09z"/><path fill="#f7d34c" fill-rule="evenodd" d="M21.04 6.11l.28.06.32.12.35.18.36.27.36.35.35.47.32.59.28.73.21.88.14 1.04.05 1.23-.06 1.23-.16 1.04-.24.86-.32.71-.36.57-.4.45-.42.33-.42.24-.4.16-.36.09-.32.05-.24.02-.16-.01h-8.22v.82h5.84l.01 2.76.02.36-.05.34-.11.31-.17.29-.25.25-.31.24-.38.2-.44.17-.51.15-.58.13-.64.09-.71.07-.77.04-.84.01-1.27-.04-1.07-.14-.9-.2-.73-.25-.59-.3-.45-.33-.34-.34-.25-.34-.16-.33-.1-.3-.04-.25-.02-.2.01-.13v-5.34l.05-.64.13-.54.21-.46.26-.38.3-.32.33-.24.35-.2.35-.14.33-.1.3-.06.26-.04.21-.02.13-.01h5.84l.69-.05.59-.14.5-.21.41-.28.33-.32.27-.35.2-.36.15-.36.1-.35.07-.32.04-.28.02-.21V6.07h2.09l.14.01zm-6.47 14.25l-.23.33-.08.41.08.41.23.33.33.23.41.08.41-.08.33-.23.23-.33.08-.41-.08-.41-.23-.33-.33-.23-.41-.08-.41.08z"/></g></svg>
<div class="f" style="left:258.5px;top:172.0px"><span style="letter-spacing:-0.00px;margin-right:0.00px">ocrtest1.py</span></div>
<svg class="ic" style="left:320px;top:135px" width="28" height="35" viewBox="0 0 28 35"><rect x=".5" y=".5" width="27" height="34" rx="3.5" fill="#f8f8f8" stroke="#d9d9d9"/><rect x="1.5" y="31" width="25" height="3" rx="1.5" fill="#e6e6e6"/><g transform="translate(5.400,7.800) scale(.72)"><path fill="#3f7fb6" fill-rule="evenodd" d="M14.25.18l.9.2.73.26.59.3.45.32.34.34.25.34.16.33.1.3.04.26.02.2-.01.13V8.5l-.05.63-.13.55-.21.46-.26.38-.3.31-.33.25-.35.19-.35.14-.33.1-.3.07-.26.04-.21.02H8.77l-.69.05-.59.14-.5.22-.41.27-.33.32-.27.35-.2.36-.15.37-.1.35-.07.32-.04.27-.02.21v3.06H3.17l-.21-.03-.28-.07-.32-.12-.35-.18-.36-.26-.36-.36-.35-.46-.32-.59-.28-.73-.21-.88-.14-1.05-.05-1.23.06-1.22.16-1.04.24-.87.32-.71.36-.57.4-.44.42-.33.42-.24.4-.16.36-.1.32-.05.24-.01h.16l.06.01h8.16v-.83H6.18l-.01-2.75-.02-.37.05-.34.11-.31.17-.28.25-.26.31-.23.38-.2.44-.18.51-.15.58-.12.64-.1.71-.06.77-.04.84-.02 1.27.05zm-6.3 1.98l-.23.33-.08.41.08.41.23.34.33.22.41.09.41-.09.33-.22.23-.34.08-.41-.08-.41-.23-.33-.33-.22-.41-.09-.41.09z"/><path fill="#f7d34c" fill-rule="evenodd" d="M21.04 6.11l.28.06.32.12.35.18.36.27.36.35.35.47.32.59.28.73.21.88.14 1.04.05 1.23-.06 1.23-.16 1.04-.24.86-.32.71-.36.57-.4.45-.42.33-.42.24-.4.16-.36.09-.32.05-.24.02-.16-.01h-8.22v.82h5.84l.01 2.76.02.36-.05.34-.11.31-.17.29-.25.25-.31.24-.38.2-.44.17-.51.15-.58.13-.64.09-.71.07-.77.04-.84.01-1.27-.04-1.07-.14-.9-.2-.73-.25-.59-.3-.45-.33-.34-.34-.25-.34-.16-.33-.1-.3-.04-.25-.02-.2.01-.13v-5.34l.05-.64.13-.54.21-.46.26-.38.3-.32.33-.24.35-.2.35-.14.33-.1.3-.06.26-.04.21-.02.13-.01h5.84l.69-.05.59-.14.5-.21.41-.28.33-.32.27-.35.2-.36.15-.36.1-.35.07-.32.04-.28.02-.21V6.07h2.09l.14.01zm-6.47 14.25l-.23.33-.08.41.08.41.23.33.33.23.41.08.41-.08.33-.23.23-.33.08-.41-.08-.41-.23-.33-.33-.23-.41-.08-.41.08z"/></g></svg>
<div class="f" style="left:334px;top:172.0px"><span style="letter-spacing:-0.01px;margin-right:0.01px">ocrtest2.py</span></div>
<svg class="ic" style="left:395px;top:135px" width="28" height="35" viewBox="0 0 28 35"><rect x=".5" y=".5" width="27" height="34" rx="3.5" fill="#f8f8f8" stroke="#d9d9d9"/><rect x="1.5" y="31" width="25" height="3" rx="1.5" fill="#e6e6e6"/><g transform="translate(5.400,7.800) scale(.72)"><path fill="#3f7fb6" fill-rule="evenodd" d="M14.25.18l.9.2.73.26.59.3.45.32.34.34.25.34.16.33.1.3.04.26.02.2-.01.13V8.5l-.05.63-.13.55-.21.46-.26.38-.3.31-.33.25-.35.19-.35.14-.33.1-.3.07-.26.04-.21.02H8.77l-.69.05-.59.14-.5.22-.41.27-.33.32-.27.35-.2.36-.15.37-.1.35-.07.32-.04.27-.02.21v3.06H3.17l-.21-.03-.28-.07-.32-.12-.35-.18-.36-.26-.36-.36-.35-.46-.32-.59-.28-.73-.21-.88-.14-1.05-.05-1.23.06-1.22.16-1.04.24-.87.32-.71.36-.57.4-.44.42-.33.42-.24.4-.16.36-.1.32-.05.24-.01h.16l.06.01h8.16v-.83H6.18l-.01-2.75-.02-.37.05-.34.11-.31.17-.28.25-.26.31-.23.38-.2.44-.18.51-.15.58-.12.64-.1.71-.06.77-.04.84-.02 1.27.05zm-6.3 1.98l-.23.33-.08.41.08.41.23.34.33.22.41.09.41-.09.33-.22.23-.34.08-.41-.08-.41-.23-.33-.33-.22-.41-.09-.41.09z"/><path fill="#f7d34c" fill-rule="evenodd" d="M21.04 6.11l.28.06.32.12.35.18.36.27.36.35.35.47.32.59.28.73.21.88.14 1.04.05 1.23-.06 1.23-.16 1.04-.24.86-.32.71-.36.57-.4.45-.42.33-.42.24-.4.16-.36.09-.32.05-.24.02-.16-.01h-8.22v.82h5.84l.01 2.76.02.36-.05.34-.11.31-.17.29-.25.25-.31.24-.38.2-.44.17-.51.15-.58.13-.64.09-.71.07-.77.04-.84.01-1.27-.04-1.07-.14-.9-.2-.73-.25-.59-.3-.45-.33-.34-.34-.25-.34-.16-.33-.1-.3-.04-.25-.02-.2.01-.13v-5.34l.05-.64.13-.54.21-.46.26-.38.3-.32.33-.24.35-.2.35-.14.33-.1.3-.06.26-.04.21-.02.13-.01h5.84l.69-.05.59-.14.5-.21.41-.28.33-.32.27-.35.2-.36.15-.36.1-.35.07-.32.04-.28.02-.21V6.07h2.09l.14.01zm-6.47 14.25l-.23.33-.08.41.08.41.23.33.33.23.41.08.41-.08.33-.23.23-.33.08-.41-.08-.41-.23-.33-.33-.23-.41-.08-.41.08z"/></g></svg>
<div class="f" style="left:409.5px;top:172.0px"><span style="letter-spacing:-0.07px;margin-right:0.07px">ocrtest3.py</span></div>
<svg class="ic" style="left:471px;top:135px" width="28" height="35" viewBox="0 0 28 35"><rect x=".5" y=".5" width="27" height="34" rx="3.5" fill="#f8f8f8" stroke="#d9d9d9"/><rect x="1.5" y="31" width="25" height="3" rx="1.5" fill="#e6e6e6"/><g transform="translate(5.400,7.800) scale(.72)"><path fill="#3f7fb6" fill-rule="evenodd" d="M14.25.18l.9.2.73.26.59.3.45.32.34.34.25.34.16.33.1.3.04.26.02.2-.01.13V8.5l-.05.63-.13.55-.21.46-.26.38-.3.31-.33.25-.35.19-.35.14-.33.1-.3.07-.26.04-.21.02H8.77l-.69.05-.59.14-.5.22-.41.27-.33.32-.27.35-.2.36-.15.37-.1.35-.07.32-.04.27-.02.21v3.06H3.17l-.21-.03-.28-.07-.32-.12-.35-.18-.36-.26-.36-.36-.35-.46-.32-.59-.28-.73-.21-.88-.14-1.05-.05-1.23.06-1.22.16-1.04.24-.87.32-.71.36-.57.4-.44.42-.33.42-.24.4-.16.36-.1.32-.05.24-.01h.16l.06.01h8.16v-.83H6.18l-.01-2.75-.02-.37.05-.34.11-.31.17-.28.25-.26.31-.23.38-.2.44-.18.51-.15.58-.12.64-.1.71-.06.77-.04.84-.02 1.27.05zm-6.3 1.98l-.23.33-.08.41.08.41.23.34.33.22.41.09.41-.09.33-.22.23-.34.08-.41-.08-.41-.23-.33-.33-.22-.41-.09-.41.09z"/><path fill="#f7d34c" fill-rule="evenodd" d="M21.04 6.11l.28.06.32.12.35.18.36.27.36.35.35.47.32.59.28.73.21.88.14 1.04.05 1.23-.06 1.23-.16 1.04-.24.86-.32.71-.36.57-.4.45-.42.33-.42.24-.4.16-.36.09-.32.05-.24.02-.16-.01h-8.22v.82h5.84l.01 2.76.02.36-.05.34-.11.31-.17.29-.25.25-.31.24-.38.2-.44.17-.51.15-.58.13-.64.09-.71.07-.77.04-.84.01-1.27-.04-1.07-.14-.9-.2-.73-.25-.59-.3-.45-.33-.34-.34-.25-.34-.16-.33-.1-.3-.04-.25-.02-.2.01-.13v-5.34l.05-.64.13-.54.21-.46.26-.38.3-.32.33-.24.35-.2.35-.14.33-.1.3-.06.26-.04.21-.02.13-.01h5.84l.69-.05.59-.14.5-.21.41-.28.33-.32.27-.35.2-.36.15-.36.1-.35.07-.32.04-.28.02-.21V6.07h2.09l.14.01zm-6.47 14.25l-.23.33-.08.41.08.41.23.33.33.23.41.08.41-.08.33-.23.23-.33.08-.41-.08-.41-.23-.33-.33-.23-.41-.08-.41.08z"/></g></svg>
<div class="f" style="left:485px;top:172.0px"><span style="letter-spacing:-0.00px;margin-right:0.00px">ocrtest4.py</span></div>
<svg class="ic" style="left:546px;top:135px" width="28" height="35" viewBox="0 0 28 35"><rect x=".5" y=".5" width="27" height="34" rx="3.5" fill="#f8f8f8" stroke="#d9d9d9"/><rect x="1.5" y="31" width="25" height="3" rx="1.5" fill="#e6e6e6"/><g transform="translate(5.400,7.800) scale(.72)"><path fill="#3f7fb6" fill-rule="evenodd" d="M14.25.18l.9.2.73.26.59.3.45.32.34.34.25.34.16.33.1.3.04.26.02.2-.01.13V8.5l-.05.63-.13.55-.21.46-.26.38-.3.31-.33.25-.35.19-.35.14-.33.1-.3.07-.26.04-.21.02H8.77l-.69.05-.59.14-.5.22-.41.27-.33.32-.27.35-.2.36-.15.37-.1.35-.07.32-.04.27-.02.21v3.06H3.17l-.21-.03-.28-.07-.32-.12-.35-.18-.36-.26-.36-.36-.35-.46-.32-.59-.28-.73-.21-.88-.14-1.05-.05-1.23.06-1.22.16-1.04.24-.87.32-.71.36-.57.4-.44.42-.33.42-.24.4-.16.36-.1.32-.05.24-.01h.16l.06.01h8.16v-.83H6.18l-.01-2.75-.02-.37.05-.34.11-.31.17-.28.25-.26.31-.23.38-.2.44-.18.51-.15.58-.12.64-.1.71-.06.77-.04.84-.02 1.27.05zm-6.3 1.98l-.23.33-.08.41.08.41.23.34.33.22.41.09.41-.09.33-.22.23-.34.08-.41-.08-.41-.23-.33-.33-.22-.41-.09-.41.09z"/><path fill="#f7d34c" fill-rule="evenodd" d="M21.04 6.11l.28.06.32.12.35.18.36.27.36.35.35.47.32.59.28.73.21.88.14 1.04.05 1.23-.06 1.23-.16 1.04-.24.86-.32.71-.36.57-.4.45-.42.33-.42.24-.4.16-.36.09-.32.05-.24.02-.16-.01h-8.22v.82h5.84l.01 2.76.02.36-.05.34-.11.31-.17.29-.25.25-.31.24-.38.2-.44.17-.51.15-.58.13-.64.09-.71.07-.77.04-.84.01-1.27-.04-1.07-.14-.9-.2-.73-.25-.59-.3-.45-.33-.34-.34-.25-.34-.16-.33-.1-.3-.04-.25-.02-.2.01-.13v-5.34l.05-.64.13-.54.21-.46.26-.38.3-.32.33-.24.35-.2.35-.14.33-.1.3-.06.26-.04.21-.02.13-.01h5.84l.69-.05.59-.14.5-.21.41-.28.33-.32.27-.35.2-.36.15-.36.1-.35.07-.32.04-.28.02-.21V6.07h2.09l.14.01zm-6.47 14.25l-.23.33-.08.41.08.41.23.33.33.23.41.08.41-.08.33-.23.23-.33.08-.41-.08-.41-.23-.33-.33-.23-.41-.08-.41.08z"/></g></svg>
<div class="f" style="left:560.5px;top:172.0px"><span style="letter-spacing:0.10px;margin-right:-0.10px">ocrtest_</span><br><span style="letter-spacing:-0.48px;margin-right:0.48px">cam.py</span></div>
<svg class="ic" style="left:618.5px;top:122px" width="33" height="48" viewBox="0 0 33 48"><rect x=".5" y=".5" width="32" height="47" fill="#fff" stroke="#d4d4d4"/><rect x="4" y="6" width="10" height="1" fill="#c9cfcc"/><rect x="20" y="9" width="8" height="1" fill="#cfd4d2"/><rect x="22" y="12" width="7" height="3" fill="#d9dde6"/><rect x="3" y="18" width="27" height="3.500" fill="#c4dcd2"/><rect x="3" y="23.5" width="27" height=".7" fill="#d6dedb"/><rect x="3" y="26.5" width="27" height=".7" fill="#d6dedb"/><rect x="3" y="29.5" width="27" height=".7" fill="#d6dedb"/><rect x="3" y="32.5" width="27" height=".7" fill="#d6dedb"/><rect x="3" y="35.5" width="27" height=".7" fill="#d6dedb"/><rect x="12" y="18" width=".7" height="17" fill="#d6dedb"/><rect x="19" y="18" width=".7" height="17" fill="#d6dedb"/><rect x="24" y="18" width=".7" height="17" fill="#d6dedb"/><rect x="19" y="34" width="5" height="2.500" fill="#b9cfc7"/><rect x="4" y="38" width="8" height=".8" fill="#d5dad8"/><rect x="4" y="41" width="2" height="3" fill="#c4dcd2"/></svg>
<div class="f" style="left:636px;top:172.0px"><span style="letter-spacing:-0.21px;margin-right:0.21px">sample.png</span></div>
<svg class="ic" style="left:166px;top:204px" width="34" height="48" viewBox="0 0 34 48"><rect x=".5" y=".5" width="33" height="47" fill="#fff" stroke="#d4d4d4"/><rect x="4" y="6" width="10" height="1" fill="#c9cfcc"/><rect x="20" y="9" width="8" height="1" fill="#cfd4d2"/><rect x="22" y="12" width="7" height="3" fill="#d9dde6"/><rect x="3" y="18" width="28" height="3.500" fill="#c4dcd2"/><rect x="3" y="23.5" width="28" height=".7" fill="#d6dedb"/><rect x="3" y="26.5" width="28" height=".7" fill="#d6dedb"/><rect x="3" y="29.5" width="28" height=".7" fill="#d6dedb"/><rect x="3" y="32.5" width="28" height=".7" fill="#d6dedb"/><rect x="3" y="35.5" width="28" height=".7" fill="#d6dedb"/><rect x="12" y="18" width=".7" height="17" fill="#d6dedb"/><rect x="19" y="18" width=".7" height="17" fill="#d6dedb"/><rect x="24" y="18" width=".7" height="17" fill="#d6dedb"/><rect x="19" y="34" width="5" height="2.500" fill="#b9cfc7"/><rect x="4" y="38" width="8" height=".8" fill="#d5dad8"/><rect x="4" y="41" width="2" height="3" fill="#c4dcd2"/></svg>
<div class="f" style="left:183px;top:254.4px"><span style="letter-spacing:-0.25px;margin-right:0.25px">sample0.</span><br><span style="letter-spacing:-0.47px;margin-right:0.47px">png</span></div>
<svg class="ic" style="left:241.5px;top:204px" width="34" height="48" viewBox="0 0 34 48"><rect x=".5" y=".5" width="33" height="47" fill="#fff" stroke="#d4d4d4"/><rect x="4" y="6" width="10" height="1" fill="#c9cfcc"/><rect x="20" y="9" width="8" height="1" fill="#cfd4d2"/><rect x="22" y="12" width="7" height="3" fill="#d9dde6"/><rect x="3" y="18" width="28" height="3.500" fill="#c4dcd2"/><rect x="3" y="23.5" width="28" height=".7" fill="#d6dedb"/><rect x="3" y="26.5" width="28" height=".7" fill="#d6dedb"/><rect x="3" y="29.5" width="28" height=".7" fill="#d6dedb"/><rect x="3" y="32.5" width="28" height=".7" fill="#d6dedb"/><rect x="3" y="35.5" width="28" height=".7" fill="#d6dedb"/><rect x="12" y="18" width=".7" height="17" fill="#d6dedb"/><rect x="19" y="18" width=".7" height="17" fill="#d6dedb"/><rect x="24" y="18" width=".7" height="17" fill="#d6dedb"/><rect x="19" y="34" width="5" height="2.500" fill="#b9cfc7"/><rect x="4" y="38" width="8" height=".8" fill="#d5dad8"/><rect x="4" y="41" width="2" height="3" fill="#c4dcd2"/></svg>
<div class="f" style="left:258.5px;top:254.4px"><span style="letter-spacing:-0.29px;margin-right:0.29px">sample1.</span><br><span style="letter-spacing:-0.47px;margin-right:0.47px">png</span></div>
<svg class="ic" style="left:317px;top:204px" width="34" height="48" viewBox="0 0 34 48"><rect x=".5" y=".5" width="33" height="47" fill="#fff" stroke="#d4d4d4"/><rect x="4" y="6" width="10" height="1" fill="#c9cfcc"/><rect x="20" y="9" width="8" height="1" fill="#cfd4d2"/><rect x="22" y="12" width="7" height="3" fill="#d9dde6"/><rect x="3" y="18" width="28" height="3.500" fill="#c4dcd2"/><rect x="3" y="23.5" width="28" height=".7" fill="#d6dedb"/><rect x="3" y="26.5" width="28" height=".7" fill="#d6dedb"/><rect x="3" y="29.5" width="28" height=".7" fill="#d6dedb"/><rect x="3" y="32.5" width="28" height=".7" fill="#d6dedb"/><rect x="3" y="35.5" width="28" height=".7" fill="#d6dedb"/><rect x="12" y="18" width=".7" height="17" fill="#d6dedb"/><rect x="19" y="18" width=".7" height="17" fill="#d6dedb"/><rect x="24" y="18" width=".7" height="17" fill="#d6dedb"/><rect x="19" y="34" width="5" height="2.500" fill="#b9cfc7"/><rect x="4" y="38" width="8" height=".8" fill="#d5dad8"/><rect x="4" y="41" width="2" height="3" fill="#c4dcd2"/></svg>
<div class="f" style="left:334px;top:254.4px"><span style="letter-spacing:-0.32px;margin-right:0.32px">sample2.</span><br><span style="letter-spacing:-0.47px;margin-right:0.47px">png</span></div>
<svg class="ic" style="left:392.5px;top:204px" width="34" height="48" viewBox="0 0 34 48"><rect x=".5" y=".5" width="33" height="47" fill="#fff" stroke="#d4d4d4"/><rect x="4" y="6" width="10" height="1" fill="#c9cfcc"/><rect x="20" y="9" width="8" height="1" fill="#cfd4d2"/><rect x="22" y="12" width="7" height="3" fill="#d9dde6"/><rect x="3" y="18" width="28" height="3.500" fill="#c4dcd2"/><rect x="3" y="23.5" width="28" height=".7" fill="#d6dedb"/><rect x="3" y="26.5" width="28" height=".7" fill="#d6dedb"/><rect x="3" y="29.5" width="28" height=".7" fill="#d6dedb"/><rect x="3" y="32.5" width="28" height=".7" fill="#d6dedb"/><rect x="3" y="35.5" width="28" height=".7" fill="#d6dedb"/><rect x="12" y="18" width=".7" height="17" fill="#d6dedb"/><rect x="19" y="18" width=".7" height="17" fill="#d6dedb"/><rect x="24" y="18" width=".7" height="17" fill="#d6dedb"/><rect x="19" y="34" width="5" height="2.500" fill="#b9cfc7"/><rect x="4" y="38" width="8" height=".8" fill="#d5dad8"/><rect x="4" y="41" width="2" height="3" fill="#c4dcd2"/></svg>
<div class="f" style="left:409.5px;top:254.4px"><span style="letter-spacing:-0.40px;margin-right:0.40px">sample_</span><br><span style="letter-spacing:0.19px;margin-right:-0.19px">jpg.jpg</span></div>
<svg class="ic" style="left:471px;top:204px" width="28" height="48" viewBox="0 0 28 48"><rect x=".5" y=".5" width="27" height="47" fill="#fff" stroke="#d4d4d4"/><rect x="3" y="3" width="22" height=".8" fill="#cfd6d4"/><rect x="4" y="7" width="12" height=".8" fill="#d9dddc"/><rect x="4" y="9.5" width="19" height=".8" fill="#d9dddc"/><rect x="4" y="12" width="19" height=".8" fill="#d9dddc"/><rect x="4" y="17" width="12" height=".8" fill="#d9dddc"/><rect x="4" y="19.5" width="19" height=".8" fill="#d9dddc"/><rect x="4" y="22" width="19" height=".8" fill="#d9dddc"/><rect x="4" y="24.5" width="12" height=".8" fill="#d9dddc"/><rect x="4" y="27" width="19" height=".8" fill="#d9dddc"/><rect x="4" y="32" width="19" height=".8" fill="#d9dddc"/><rect x="4" y="34.5" width="12" height=".8" fill="#d9dddc"/><rect x="4" y="37" width="19" height=".8" fill="#d9dddc"/><rect x="4" y="39.5" width="19" height=".8" fill="#d9dddc"/><rect x="4" y="42" width="12" height=".8" fill="#d9dddc"/><rect x="2.500" y="15" width="2" height="1.200" fill="#b9c4c0"/><rect x="2.500" y="30" width="2" height="1.200" fill="#b9c4c0"/></svg>
<div class="f" style="left:485px;top:254.4px"><span style="letter-spacing:0.04px;margin-right:-0.04px">test.png</span></div>
<svg class="ic" style="left:536px;top:226px" width="49" height="26" viewBox="0 0 49 26"><rect x=".5" y=".5" width="48" height="25" fill="#fff" stroke="#d4d4d4"/><rect x="5" y="6" width="7" height="1" fill="#bfc4c6"/><rect x="5" y="10.5" width="1.200" height="1" fill="#b8bcbe"/><rect x="8" y="10.5" width="22" height="1" fill="#cdd1d3"/><rect x="32" y="10.5" width="8" height="1" fill="#d4d7d8"/><rect x="5" y="13.7" width="1.200" height="1" fill="#b8bcbe"/><rect x="8" y="13.7" width="14" height="1" fill="#cdd1d3"/><rect x="24" y="13.7" width="14" height="1" fill="#d4d7d8"/><rect x="5" y="16.9" width="1.200" height="1" fill="#b8bcbe"/><rect x="8" y="16.9" width="20" height="1" fill="#cdd1d3"/><rect x="30" y="16.9" width="9" height="1" fill="#d4d7d8"/><rect x="5" y="20.1" width="1.200" height="1" fill="#b8bcbe"/><rect x="8" y="20.1" width="12" height="1" fill="#cdd1d3"/><rect x="22" y="20.1" width="12" height="1" fill="#d4d7d8"/></svg>
<div class="f" style="left:560.5px;top:254.4px"><span style="letter-spacing:0.10px;margin-right:-0.10px">test1.jpg</span></div>
<svg class="ic" style="left:611.5px;top:226px" width="49" height="26" viewBox="0 0 49 26"><rect x=".5" y=".5" width="48" height="25" fill="#fff" stroke="#d4d4d4"/><rect x="5" y="6" width="7" height="1" fill="#bfc4c6"/><rect x="5" y="10.5" width="1.200" height="1" fill="#b8bcbe"/><rect x="8" y="10.5" width="22" height="1" fill="#cdd1d3"/><rect x="32" y="10.5" width="8" height="1" fill="#d4d7d8"/><rect x="5" y="13.7" width="1.200" height="1" fill="#b8bcbe"/><rect x="8" y="13.7" width="14" height="1" fill="#cdd1d3"/><rect x="24" y="13.7" width="14" height="1" fill="#d4d7d8"/><rect x="5" y="16.9" width="1.200" height="1" fill="#b8bcbe"/><rect x="8" y="16.9" width="20" height="1" fill="#cdd1d3"/><rect x="30" y="16.9" width="9" height="1" fill="#d4d7d8"/><rect x="5" y="20.1" width="1.200" height="1" fill="#b8bcbe"/><rect x="8" y="20.1" width="12" height="1" fill="#cdd1d3"/><rect x="22" y="20.1" width="12" height="1" fill="#d4d7d8"/></svg>
<div class="f" style="left:636px;top:254.4px"><span style="letter-spacing:0.04px;margin-right:-0.04px">test1.png</span></div>
<svg class="ic" style="left:158.5px;top:309px" width="49" height="25" viewBox="0 0 49 25"><rect x=".5" y=".5" width="48" height="24" fill="#fff" stroke="#d4d4d4"/><rect x="4" y="5" width="38" height="1" fill="#b9bec1"/><rect x="4" y="8.5" width="41" height="1" fill="#c9cdcf"/><rect x="4" y="11" width="30" height="1" fill="#b9bec1"/><rect x="4" y="14.5" width="41" height="1" fill="#c9cdcf"/><rect x="4" y="17" width="36" height="1" fill="#b9bec1"/><rect x="4" y="20" width="40" height="1" fill="#c9cdcf"/><rect x="4" y="14" width="5" height="2" fill="#aeb4b8"/><rect x="4" y="19.500" width="5" height="2" fill="#aeb4b8"/></svg>
<div class="f" style="left:183px;top:335.7px"><span style="letter-spacing:-0.13px;margin-right:0.13px">test-g.png</span></div>
<svg class="ic" style="left:234px;top:309px" width="49" height="25" viewBox="0 0 49 25"><rect x=".5" y=".5" width="48" height="24" fill="#fff" stroke="#d4d4d4"/><rect x="4" y="5" width="38" height="1" fill="#b9bec1"/><rect x="4" y="8.5" width="41" height="1" fill="#c9cdcf"/><rect x="4" y="11" width="30" height="1" fill="#b9bec1"/><rect x="4" y="14.5" width="41" height="1" fill="#c9cdcf"/><rect x="4" y="17" width="36" height="1" fill="#b9bec1"/><rect x="4" y="20" width="40" height="1" fill="#c9cdcf"/><rect x="4" y="14" width="5" height="2" fill="#aeb4b8"/><rect x="4" y="19.500" width="5" height="2" fill="#aeb4b8"/></svg>
<div class="f" style="left:258.5px;top:335.7px"><span style="letter-spacing:-0.18px;margin-right:0.18px">test-m.png</span></div>
<svg class="ic" style="left:320px;top:299px" width="28" height="35" viewBox="0 0 28 35"><rect x=".5" y=".5" width="27" height="34" rx="3.5" fill="#f8f8f8" stroke="#d9d9d9"/><rect x="1.5" y="31" width="25" height="3" rx="1.5" fill="#e6e6e6"/><g transform="translate(5.400,7.800) scale(.72)"><path fill="#3f7fb6" fill-rule="evenodd" d="M14.25.18l.9.2.73.26.59.3.45.32.34.34.25.34.16.33.1.3.04.26.02.2-.01.13V8.5l-.05.63-.13.55-.21.46-.26.38-.3.31-.33.25-.35.19-.35.14-.33.1-.3.07-.26.04-.21.02H8.77l-.69.05-.59.14-.5.22-.41.27-.33.32-.27.35-.2.36-.15.37-.1.35-.07.32-.04.27-.02.21v3.06H3.17l-.21-.03-.28-.07-.32-.12-.35-.18-.36-.26-.36-.36-.35-.46-.32-.59-.28-.73-.21-.88-.14-1.05-.05-1.23.06-1.22.16-1.04.24-.87.32-.71.36-.57.4-.44.42-.33.42-.24.4-.16.36-.1.32-.05.24-.01h.16l.06.01h8.16v-.83H6.18l-.01-2.75-.02-.37.05-.34.11-.31.17-.28.25-.26.31-.23.38-.2.44-.18.51-.15.58-.12.64-.1.71-.06.77-.04.84-.02 1.27.05zm-6.3 1.98l-.23.33-.08.41.08.41.23.34.33.22.41.09.41-.09.33-.22.23-.34.08-.41-.08-.41-.23-.33-.33-.22-.41-.09-.41.09z"/><path fill="#f7d34c" fill-rule="evenodd" d="M21.04 6.11l.28.06.32.12.35.18.36.27.36.35.35.47.32.59.28.73.21.88.14 1.04.05 1.23-.06 1.23-.16 1.04-.24.86-.32.71-.36.57-.4.45-.42.33-.42.24-.4.16-.36.09-.32.05-.24.02-.16-.01h-8.22v.82h5.84l.01 2.76.02.36-.05.34-.11.31-.17.29-.25.25-.31.24-.38.2-.44.17-.51.15-.58.13-.64.09-.71.07-.77.04-.84.01-1.27-.04-1.07-.14-.9-.2-.73-.25-.59-.3-.45-.33-.34-.34-.25-.34-.16-.33-.1-.3-.04-.25-.02-.2.01-.13v-5.34l.05-.64.13-.54.21-.46.26-.38.3-.32.33-.24.35-.2.35-.14.33-.1.3-.06.26-.04.21-.02.13-.01h5.84l.69-.05.59-.14.5-.21.41-.28.33-.32.27-.35.2-.36.15-.36.1-.35.07-.32.04-.28.02-.21V6.07h2.09l.14.01zm-6.47 14.25l-.23.33-.08.41.08.41.23.33.33.23.41.08.41-.08.33-.23.23-.33.08-.41-.08-.41-.23-.33-.33-.23-.41-.08-.41.08z"/></g></svg>
<div class="f" style="left:334px;top:335.7px"><span style="letter-spacing:0.00px;margin-right:-0.00px">tryocr.py</span></div>
<svg class="ic" style="left:385px;top:287px" width="48" height="47" viewBox="0 0 48 47"><rect x=".5" y=".5" width="47" height="46" fill="#fff" stroke="#d4d4d4"/><rect x="4" y="6" width="1.600" height="1.600" fill="#c3c7c9"/><rect x="7.6" y="6" width="1.600" height="1.600" fill="#c3c7c9"/><rect x="11.2" y="6" width="1.600" height="1.600" fill="#c3c7c9"/><rect x="14.8" y="6" width="1.600" height="1.600" fill="#c3c7c9"/><rect x="18.4" y="6" width="1.600" height="1.600" fill="#c3c7c9"/><rect x="22" y="6" width="1.600" height="1.600" fill="#c3c7c9"/><rect x="25.6" y="6" width="1.600" height="1.600" fill="#c3c7c9"/><rect x="4" y="13" width="1.600" height="1.600" fill="#c3c7c9"/><rect x="7.6" y="13" width="1.600" height="1.600" fill="#c3c7c9"/><rect x="11.2" y="13" width="1.600" height="1.600" fill="#c3c7c9"/><rect x="14.8" y="13" width="1.600" height="1.600" fill="#c3c7c9"/><rect x="4" y="20" width="1.600" height="1.600" fill="#c3c7c9"/><rect x="7.6" y="20" width="1.600" height="1.600" fill="#c3c7c9"/><rect x="11.2" y="20" width="1.600" height="1.600" fill="#c3c7c9"/><rect x="14.8" y="20" width="1.600" height="1.600" fill="#c3c7c9"/><rect x="4" y="27" width="1.600" height="1.600" fill="#c3c7c9"/><rect x="7.6" y="27" width="1.600" height="1.600" fill="#c3c7c9"/><rect x="11.2" y="27" width="1.600" height="1.600" fill="#c3c7c9"/><rect x="14.8" y="27" width="1.600" height="1.600" fill="#c3c7c9"/><rect x="30" y="27" width="14" height="1" fill="#c9cdcf"/><rect x="32" y="34" width="10" height="1" fill="#c9cdcf"/><rect x="32" y="41" width="10" height="1" fill="#c9cdcf"/></svg>
<div class="f" style="left:409.5px;top:335.7px"><span style="letter-spacing:-0.33px;margin-right:0.33px">yokogaki.</span><br><span style="letter-spacing:-0.47px;margin-right:0.47px">png</span></div>
</div>
<!-- NAUT-END -->

<!-- TERM-START -->
<div id="term" class="win">
<div class="hb"><div class="tt">mizutu@ubuntu-vbox: ~/workspace_py37/pyocr</div>
<div style="position:absolute;left:509px;top:14px;width:8px;height:8px;border:1.300px solid #c9c9c9"></div>
<div style="position:absolute;left:534.500px;top:10px;width:16px;height:16px;border-radius:50%;background:#646464"><svg style="position:absolute;left:4px;top:4px" width="8" height="8" viewBox="0 0 8 8"><path d="M1 1 7 7M7 1 1 7" stroke="#fff" stroke-width="1.800"/></svg></div>
</div>
<div class="tb">
<div class="r" style="top:40.44px">usage: tryocr.py [-h] [-i IMAGE_FILE] [-l LANGUAGE] [-p PREPROCESSING]</div>
<div class="r" style="top:54.12px">  -i IMAGE_FILE, --image IMAGE_FILE</div>
<div class="r" style="top:67.80px">                        Absolute path to image file or cam for camera</div>
<div class="r" style="top:81.48px">                        Input image file path or &quot;cam&quot; to use a cam's stream.</div>
<div class="r" style="top:95.16px">  -l LANGUAGE, --language LANGUAGE</div>
<div class="r" style="top:108.84px">                        Language. Default value is 'jpn'</div>
<div class="r" style="top:122.52px">  -p PREPROCESSING, --pros PREPROCESSING</div>
<div class="r" style="top:136.20px">                        Preprocessing flag.(y/n) Default value is 'n'</div>
<div class="r" style="top:149.88px">  -d LINE_DELETE, --linedel LINE_DELETE</div>
<div class="r" style="top:163.56px">                        Line delete flag.(y/n) Default value is 'n'</div>
<div class="r" style="top:177.24px">  -c CONFIDENCE, --conf CONFIDENCE</div>
<div class="r" style="top:190.92px">                        Confidence level. Default value is '40'</div>
<div class="r" style="top:204.60px">  --layout LAYOUT       Page layout. Default value is '6'</div>
<div class="r" style="top:218.28px">  -x MAXSIZE, --maxsize MAXSIZE</div>
<div class="r" style="top:231.96px">                        Image max size (free=0). Default value is '0'</div>
<div class="r" style="top:245.64px">  --log LOG             Log output flag.(y/s/n) Default value is 'n'</div>
<div class="r" style="top:259.32px">  -t TITLE, --title TITLE</div>
<div class="r" style="top:273.00px">                        Program title flag.(y/n) Default value is 'y'</div>
<div class="r" style="top:286.68px">  -s SPEED, --speed SPEED</div>
<div class="r" style="top:300.36px">                        Speed display flag.(y/n) Default value is 'y'</div>
<div class="r" style="top:314.04px">  -o IMAGE_OUT, --out IMAGE_OUT</div>
<div class="r" style="top:327.72px">                        Processed image file path. Default value is 'non'</div>
<div class="r" style="top:341.40px">(py37) <b class="g">mizutu@ubuntu-vbox</b>:<b class="bl">~/workspace_py37/pyocr</b>$ python3 tryocr.py</div>
<div class="r" style="top:368.76px"><b class="g">--- OCR on python Ver0.01 ---</b></div>
<div class="r" style="top:382.44px"><b class="g"> OpenCV version 4.5.2</b></div>
<div class="r" style="top:409.80px"><b class="y">OCR on python Ver0.01: Starting application...</b></div>
<div class="r" style="top:423.48px"><b class="y">   - Image File   :</b>  test1.png</div>
<div class="r" style="top:437.16px"><b class="y">   - Language     :</b>  jpn</div>
<div class="r" style="top:450.84px"><b class="y">   - Preprocessing:</b>  n</div>
<div class="r" style="top:464.52px"><b class="y">   - Line delete  :</b>  n</div>
<div class="r" style="top:478.20px"><b class="y">   - Confidence   :</b>  40</div>
<div class="r" style="top:491.88px"><b class="y">   - Layout       :</b>  6</div>
<div class="r" style="top:505.56px"><b class="y">   - Max size     :</b>  0</div>
<div class="r" style="top:519.24px"><b class="y">   - Log frag     :</b>  n</div>
<div class="r" style="top:532.92px"><b class="y">   - Program Title:</b>  y</div>
<div class="r" style="top:546.60px"><b class="y">   - Speed flag   :</b>  y</div>
<div class="r" style="top:560.28px"><b class="y">   - Processed out:</b>  non</div>
<div style="position:absolute;left:1.500px;top:572.16px;width:7px;height:14px;border:1px solid #e0e0e0"></div>
</div></div>
<!-- TERM-END -->

<!-- OCR-START -->
<div id="ocr" class="win">
 <div class="hb"><div class="tt">OCR on python Ver0.01&nbsp; (hit 'q' or 'esc' key to exit)</div>
  <div style="position:absolute;left:492px;top:16.500px;width:9px;height:1.600px;background:#d0d0d0"></div>
  <div style="position:absolute;left:514.500px;top:6.500px;width:16px;height:16px;border-radius:50%;background:#686868"><svg style="position:absolute;left:4px;top:4px" width="8" height="8" viewBox="0 0 8 8"><path d="M1 1 7 7M7 1 1 7" stroke="#fff" stroke-width="1.800"/></svg></div>
 </div>
 <div class="tool">
  <!-- left arrow -->
  <svg style="left:8.500px;top:5.500px" width="14" height="12" viewBox="0 0 14 12"><path d="M.8 6 6.500 .8V3.500H13.200v5H6.500V11.200z" fill="#6ea81f" stroke="#4b7f12" stroke-width=".9" stroke-linejoin="round"/></svg>
  <svg style="left:33.500px;top:5.500px" width="14" height="12" viewBox="0 0 14 12"><path d="M13.200 6 7.500 .8V3.500H.8v5H7.500V11.200z" fill="#6ea81f" stroke="#4b7f12" stroke-width=".9" stroke-linejoin="round"/></svg>
  <svg style="left:59px;top:4.500px" width="12" height="14" viewBox="0 0 12 14"><path d="M6 .8 .8 6.500H3.500V13.200h5V6.500H11.200z" fill="#6ea81f" stroke="#4b7f12" stroke-width=".9" stroke-linejoin="round"/></svg>
  <svg style="left:84px;top:4.500px" width="12" height="14" viewBox="0 0 12 14"><path d="M6 13.200 .8 7.500H3.500V.8h5V7.500H11.200z" fill="#6ea81f" stroke="#4b7f12" stroke-width=".9" stroke-linejoin="round"/></svg>
  <!-- image -->
  <svg style="left:108px" width="15" height="14" viewBox="0 0 15 14"><rect x=".8" y="1.300" width="13.400" height="11.400" rx="1.500" fill="#b5682a" stroke="#8c4b18" stroke-width=".8"/><rect x="2.800" y="3.300" width="9.400" height="7.400" fill="#6db3e8"/><path d="M2.800 10.700V8l3-2 3 2.500 3.400-1.800v4z" fill="#5da02a"/></svg>
  <!-- flag 1:1 -->
  <svg style="left:133px" width="15" height="14" viewBox="0 0 15 14"><path d="M1.500 4.500v7.500l3-2.500h4" fill="none" stroke="#2f4f8a" stroke-width="1.600"/><path d="M3.500 1.500h10.500v7H3.500z" fill="#5da02a" stroke="#356d12" stroke-width="1"/><rect x="5.500" y="3.300" width="6.500" height="3" fill="#a9d57c"/></svg>
  <!-- zoom in -->
  <svg style="left:158px" width="15" height="15" viewBox="0 0 15 15"><circle cx="9" cy="5.800" r="4.300" fill="#d8ecc0" stroke="#4f8a1a" stroke-width="1.600"/><path d="M5.800 9.200 1.800 13.200" stroke="#4a4a4a" stroke-width="2.200" stroke-linecap="round"/><path d="M7 5.800h4M9 3.800v4" stroke="#4f8a1a" stroke-width="1"/></svg>
  <!-- zoom out -->
  <svg style="left:183px" width="15" height="15" viewBox="0 0 15 15"><circle cx="9" cy="5.800" r="4.300" fill="#d8ecc0" stroke="#4f8a1a" stroke-width="1.600"/><path d="M5.800 9.200 1.800 13.200" stroke="#4a4a4a" stroke-width="2.200" stroke-linecap="round"/><path d="M7 5.800h4" stroke="#4f8a1a" stroke-width="1"/></svg>
  <!-- save -->
  <svg style="left:209px" width="14" height="14" viewBox="0 0 14 14"><path d="M1 1.500h12v11.500H1z" fill="#4c8a1a"/><rect x="4.600" y="1" width="4.800" height="4" fill="#ececec"/><rect x="4.600" y="9" width="4.800" height="4.500" fill="#ececec"/></svg>
  <!-- clipboard -->
  <svg style="left:234px" width="14" height="15" viewBox="0 0 14 15"><rect x="1" y="2" width="12" height="12.300" rx="1.800" fill="#c27a3a" stroke="#9a5a22" stroke-width=".8"/><rect x="3" y="4" width="8" height="8.500" fill="#f4f4f4"/><rect x="4.500" y=".8" width="5" height="2.600" rx="1" fill="#6d8a3a"/></svg>
  <!-- brush -->
  <svg style="left:259px" width="15" height="15" viewBox="0 0 15 15"><path d="M13.500 1.500 8 7" stroke="#9a9a9a" stroke-width="2" stroke-linecap="round"/><path d="M8.600 6 9.800 7.500 5 13.500 1.500 12 3 9.500z" fill="#b3b3b3" stroke="#909090" stroke-width=".6"/></svg>
 </div>
 <div class="img">
  <div class="h1">OCR on python Ver0.01</div>
  <div class="fps">fps:&nbsp;&nbsp;&nbsp; 1.70</div>
  <div class="h2">pros=n, linedel=n, conf=40, layout=6&nbsp; width=704, height=399</div>
<!-- OCRIMG-START -->
<span class="t" style="left:53.0px;top:74.0px;font-family:'Liberation Serif','Noto Serif CJK JP','Noto Serif CJK SC',serif;font-size:22.5px;color:#262626;letter-spacing:0.37px">最新情報</span>
<span class="t" style="left:50.0px;top:110.8px;font-family:'Liberation Serif','Noto Serif CJK JP','Noto Serif CJK SC',serif;font-size:22.5px;color:#262626;letter-spacing:0.00px">・</span>
<span class="t" style="left:76.0px;top:110.8px;font-family:'Liberation Serif','Noto Serif CJK JP','Noto Serif CJK SC',serif;font-size:22.5px;color:#262626;letter-spacing:1.00px">画像認識</span>
<span class="t" style="left:185.5px;top:109.8px;font-family:'Liberation Serif','Noto Serif CJK JP','Noto Serif CJK SC',serif;font-size:23px;color:#262626;letter-spacing:0.00px">(</span>
<span class="t" style="left:194.5px;top:110.8px;font-family:'Liberation Serif','Noto Serif CJK JP','Noto Serif CJK SC',serif;font-size:22.5px;color:#262626;letter-spacing:1.86px">Image</span>
<span class="t" style="left:271.0px;top:110.8px;font-family:'Liberation Serif','Noto Serif CJK JP','Noto Serif CJK SC',serif;font-size:22.5px;color:#262626;letter-spacing:1.73px">Recognition</span>
<span class="t" style="left:401.0px;top:109.8px;font-family:'Liberation Serif','Noto Serif CJK JP','Noto Serif CJK SC',serif;font-size:23px;color:#262626;letter-spacing:0.00px">)</span>
<span class="t" style="left:426.0px;top:110.8px;font-family:'Liberation Serif','Noto Serif CJK JP','Noto Serif CJK SC',serif;font-size:22.5px;color:#262626;letter-spacing:-1.76px">とは</span>
<span class="t" style="left:50.0px;top:147.4px;font-family:'Liberation Serif','Noto Serif CJK JP','Noto Serif CJK SC',serif;font-size:22.5px;color:#262626;letter-spacing:0.00px">・</span>
<span class="t" style="left:76.3px;top:147.4px;font-family:'Liberation Serif','Noto Serif CJK JP','Noto Serif CJK SC',serif;font-size:22.5px;color:#262626;letter-spacing:1.50px">物体検出アルゴリズム</span>
<span class="t" style="left:319.0px;top:147.4px;font-family:'Liberation Serif','Noto Serif CJK JP','Noto Serif CJK SC',serif;font-size:22.5px;color:#262626;letter-spacing:0.00px">「</span>
<span class="t" style="left:342.0px;top:146.4px;font-family:'Liberation Serif','Noto Serif CJK JP','Noto Serif CJK SC',serif;font-size:23px;color:#262626;letter-spacing:1.53px">YOLO</span>
<span class="t" style="left:420.0px;top:146.4px;font-family:'Liberation Serif','Noto Serif CJK JP','Noto Serif CJK SC',serif;font-size:23px;color:#262626;letter-spacing:0.44px">V5</span>
<span class="t" style="left:449.0px;top:147.4px;font-family:'Liberation Serif','Noto Serif CJK JP','Noto Serif CJK SC',serif;font-size:22.5px;color:#5a5a5a;letter-spacing:0.00px">」</span>
<span class="t" style="left:50.0px;top:183.5px;font-family:'Liberation Serif','Noto Serif CJK JP','Noto Serif CJK SC',serif;font-size:22.5px;color:#262626;letter-spacing:0.00px">・</span>
<span class="t" style="left:75.5px;top:183.5px;font-family:'Liberation Serif','Noto Serif CJK JP','Noto Serif CJK SC',serif;font-size:22.5px;color:#262626;letter-spacing:0.66px">顔認証</span>
<span class="t" style="left:160.0px;top:182.5px;font-family:'Liberation Serif','Noto Serif CJK JP','Noto Serif CJK SC',serif;font-size:23px;color:#262626;letter-spacing:0.00px">(</span>
<span class="t" style="left:168.0px;top:183.5px;font-family:'Liberation Serif','Noto Serif CJK JP','Noto Serif CJK SC',serif;font-size:22.5px;color:#262626;letter-spacing:1.63px">Face</span>
<span class="t" style="left:228.5px;top:183.5px;font-family:'Liberation Serif','Noto Serif CJK JP','Noto Serif CJK SC',serif;font-size:22.5px;color:#262626;letter-spacing:2.18px">recognition</span>
<span class="t" style="left:356.0px;top:182.5px;font-family:'Liberation Serif','Noto Serif CJK JP','Noto Serif CJK SC',serif;font-size:23px;color:#262626;letter-spacing:0.00px">)</span>
<span class="t" style="left:374.0px;top:183.5px;font-family:'Liberation Serif','Noto Serif CJK JP','Noto Serif CJK SC',serif;font-size:22.5px;color:#262626;letter-spacing:0.49px">概要</span>
<span class="t" style="left:50.0px;top:220.0px;font-family:'Liberation Serif','Noto Serif CJK JP','Noto Serif CJK SC',serif;font-size:22.5px;color:#262626;letter-spacing:0.00px">・</span>
<span class="t" style="left:75.5px;top:220.0px;font-family:'Liberation Serif','Noto Serif CJK JP','Noto Serif CJK SC',serif;font-size:22.5px;color:#262626;letter-spacing:1.36px">敵対的生成ネットワーク</span>
<span class="t" style="left:342.5px;top:220.0px;font-family:'Liberation Serif','Noto Serif CJK JP','Noto Serif CJK SC',serif;font-size:22.5px;color:#262626;letter-spacing:1.35px">(GAN)</span>
<div class="rb" style="left:49.8px;top:72.0px;width:97.4px;height:24.6px"></div>
<div class="rb" style="left:58.2px;top:108.6px;width:411.6px;height:27.1px"></div>
<div class="rb" style="left:58.2px;top:145.0px;width:401.3px;height:25.0px"></div>
<div class="rb" style="left:58.0px;top:218.5px;width:357.5px;height:23.9px"></div>
<div class="bb" style="left:52.0px;top:75.0px;width:47.6px;height:19.5px"></div>
<div class="bb" style="left:101.7px;top:75.0px;width:43.3px;height:19.5px"></div>
<div class="bb" style="left:75.0px;top:111.0px;width:45.6px;height:19.5px"></div>
<div class="bb" style="left:124.0px;top:111.0px;width:21.5px;height:19.5px"></div>
<div class="bb" style="left:147.7px;top:105.6px;width:31.7px;height:33.4px"></div>
<div class="bb" style="left:184.5px;top:111.0px;width:76.1px;height:21.5px"></div>
<div class="bb" style="left:268.0px;top:110.0px;width:140.0px;height:23.0px"></div>
<div class="bb" style="left:427.3px;top:111.6px;width:12.7px;height:18.4px"></div>
<div class="bb" style="left:449.0px;top:111.6px;width:18.0px;height:18.4px"></div>
<div class="bb" style="left:75.0px;top:146.6px;width:45.6px;height:20.4px"></div>
<div class="bb" style="left:124.4px;top:146.6px;width:21.6px;height:20.9px"></div>
<div class="bb" style="left:150.0px;top:146.6px;width:50.5px;height:21.4px"></div>
<div class="bb" style="left:199.6px;top:148.0px;width:41.8px;height:16.0px"></div>
<div class="bb" style="left:241.4px;top:148.0px;width:19.6px;height:18.0px"></div>
<div class="bb" style="left:274.0px;top:147.0px;width:40.8px;height:18.4px"></div>
<div class="bb" style="left:334.4px;top:147.0px;width:78.3px;height:19.0px"></div>
<div class="bb" style="left:419.0px;top:146.0px;width:38.7px;height:22.5px"></div>
<div class="bb" style="left:60.8px;top:220.7px;width:26.2px;height:19.7px"></div>
<div class="bb" style="left:87.0px;top:220.7px;width:31.0px;height:19.7px"></div>
<div class="bb" style="left:118.0px;top:220.7px;width:27.5px;height:19.7px"></div>
<div class="bb" style="left:149.5px;top:221.5px;width:19.2px;height:17.5px"></div>
<div class="bb" style="left:173.0px;top:221.5px;width:44.7px;height:18.5px"></div>
<div class="bb" style="left:226.3px;top:228.4px;width:30.7px;height:12.0px"></div>
<div class="bb" style="left:257.0px;top:221.0px;width:32.5px;height:18.5px"></div>
<div class="bb" style="left:295.0px;top:230.5px;width:21.0px;height:1.5px"></div>
<div class="bb" style="left:321.0px;top:221.0px;width:14.5px;height:18.5px"></div>
<div class="bb" style="left:59.6px;top:118.8px;width:4.0px;height:4.8px"></div>
<div class="bb" style="left:59.6px;top:155.3px;width:4.0px;height:4.8px"></div>
<div class="pb" style="left:321.0px;top:218.7px;width:94.3px;height:23.7px"></div>
<div class="pb" style="left:419.0px;top:145.5px;width:39.5px;height:24.3px"></div>
<span class="t" style="left:51.6px;top:54.3px;font-family:'Liberation Sans','Noto Sans CJK JP',sans-serif;font-size:15px;font-weight:bold;color:#1e8c22;letter-spacing:0.18px">#Score 96:</span>
<span class="t" style="left:139.6px;top:54.3px;font-family:'Liberation Sans','Noto Sans CJK JP',sans-serif;font-size:15px;font-weight:bold;color:#1e8c22;letter-spacing:-0.27px">最新 情報</span>
<span class="t" style="left:59.6px;top:89.8px;font-family:'Liberation Sans','Noto Sans CJK JP',sans-serif;font-size:15px;font-weight:bold;color:#1e8c22;letter-spacing:0.18px">#Score 96:</span>
<span class="t" style="left:147.5px;top:89.8px;font-family:'Liberation Sans','Noto Sans CJK JP',sans-serif;font-size:15px;font-weight:bold;color:#1e8c22;letter-spacing:0.31px">・ 画 像 認識 (Image Recognition) と は</span>
<span class="t" style="left:59.6px;top:128.0px;font-family:'Liberation Sans','Noto Sans CJK JP',sans-serif;font-size:15px;font-weight:bold;color:#1e8c22;letter-spacing:0.18px">#Score 74:</span>
<span class="t" style="left:147.5px;top:128.0px;font-family:'Liberation Sans','Noto Sans CJK JP',sans-serif;font-size:15px;font-weight:bold;color:#1e8c22;letter-spacing:-0.32px">・ 物 体 検出 アル ゴリ ズム 「YOLO V5」</span>
<span class="t" style="left:59.6px;top:200.0px;font-family:'Liberation Sans','Noto Sans CJK JP',sans-serif;font-size:15px;font-weight:bold;color:#1e8c22;letter-spacing:0.18px">#Score 92:</span>
<span class="t" style="left:147.5px;top:200.0px;font-family:'Liberation Sans','Noto Sans CJK JP',sans-serif;font-size:15px;font-weight:bold;color:#1e8c22;letter-spacing:0.15px">・ 敵 対 的 生成 ネッ トワ ーク (GAN)</span>
<!-- OCRIMG-END -->
 </div>
 <div class="stat">(x=532, y=8) ~ <span style="color:#e33">R:255</span> <span style="color:#3a9a3a">G:255</span> <span style="color:#33e">B:255</span></div>
</div>
<!-- OCR-END -->

</body>
</html>
